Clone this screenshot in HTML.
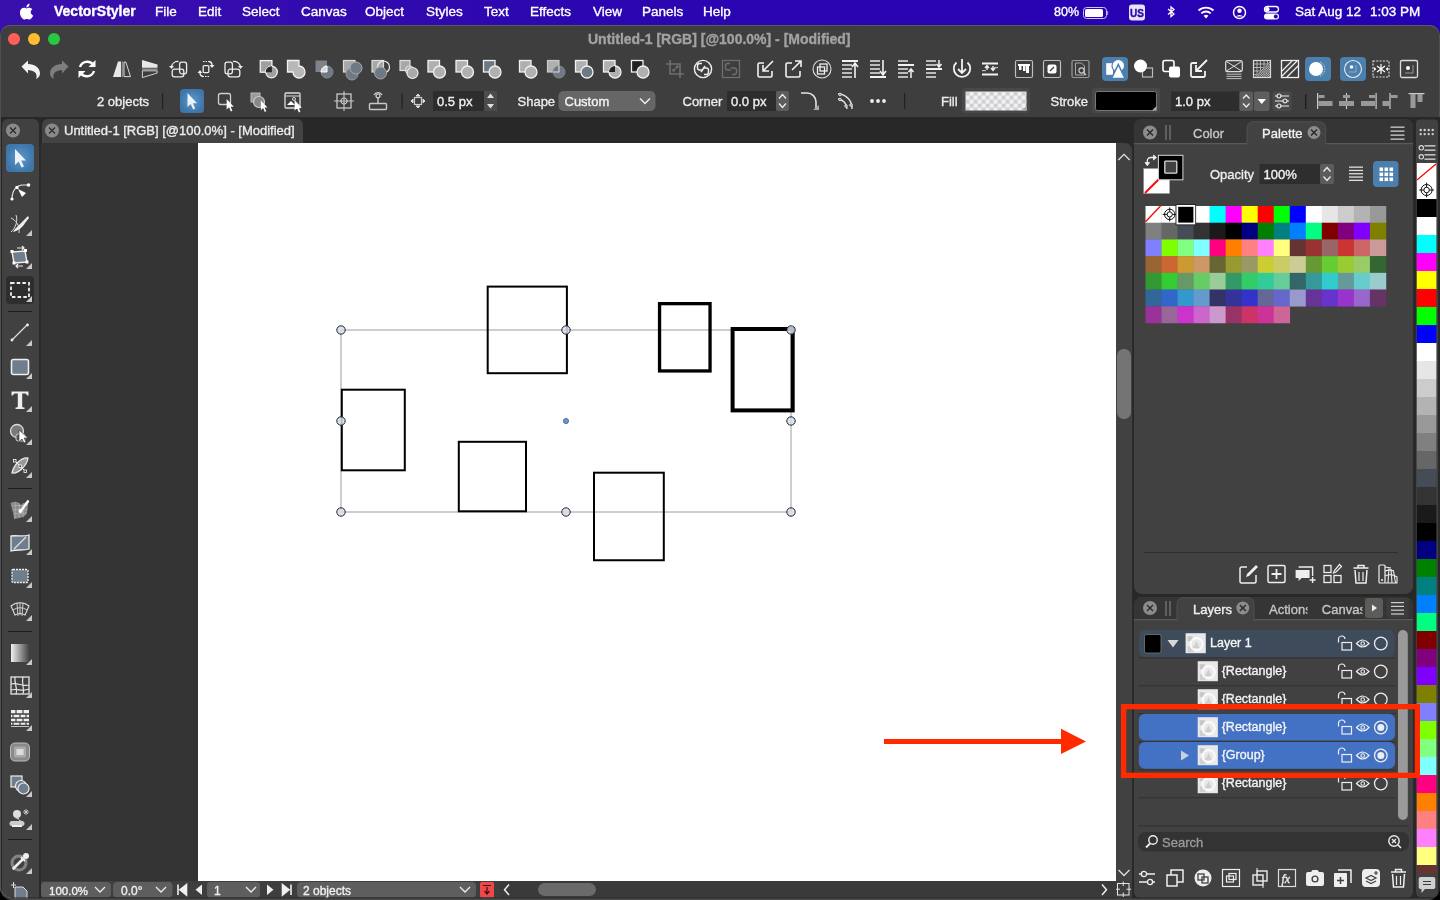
<!DOCTYPE html><html><head><meta charset="utf-8"><style>
html,body{margin:0;padding:0;width:1440px;height:900px;overflow:hidden;background:#000;}
body{font-family:"Liberation Sans",sans-serif;position:relative;-webkit-font-smoothing:antialiased;}
.t{-webkit-text-stroke:0.35px currentColor;}
div,svg{box-sizing:border-box;will-change:transform;}
</style></head><body>
<div style="position:absolute;left:0px;top:0px;width:1440px;height:40px;background:linear-gradient(90deg,#3a10ac,#2c06b0 40%,#2500b4);"></div>
<svg style="position:absolute;left:0px;top:0px;overflow:visible;" width="60" height="25" viewBox="0 0 60 25"><g transform="translate(27.5,11.3) scale(1.02) translate(-24.5,-12.3)"><path d="M27.6 13.2c0-1.9 1.6-2.8 1.6-2.9-.9-1.3-2.3-1.5-2.8-1.5-1.2-.1-2.3.7-2.9.7-.6 0-1.5-.7-2.5-.7-1.3 0-2.5.8-3.2 1.9-1.4 2.4-.4 5.9 1 7.8.7.9 1.4 2 2.5 1.9 1-.0 1.4-.6 2.6-.6 1.2 0 1.5.6 2.6.6 1.1 0 1.8-1 2.4-1.9.8-1.1 1.1-2.1 1.1-2.2 0 0-2.1-.8-2.4-3.1zM25.7 7.4c.5-.7.9-1.6.8-2.5-.8 0-1.8.5-2.3 1.2-.5.6-.9 1.5-.8 2.4.9.1 1.8-.4 2.3-1.1z" fill="#fff"/></g></svg>
<div class="t" style="position:absolute;left:54px;top:4.2px;font-size:14px;font-weight:700;color:#fff;white-space:pre;line-height:1;">VectorStyler</div>
<div class="t" style="position:absolute;left:155px;top:4.5px;font-size:13.5px;font-weight:400;color:#fff;white-space:pre;line-height:1;">File</div>
<div class="t" style="position:absolute;left:198px;top:4.5px;font-size:13.5px;font-weight:400;color:#fff;white-space:pre;line-height:1;">Edit</div>
<div class="t" style="position:absolute;left:242px;top:4.5px;font-size:13.5px;font-weight:400;color:#fff;white-space:pre;line-height:1;">Select</div>
<div class="t" style="position:absolute;left:301px;top:4.5px;font-size:13.5px;font-weight:400;color:#fff;white-space:pre;line-height:1;">Canvas</div>
<div class="t" style="position:absolute;left:365px;top:4.5px;font-size:13.5px;font-weight:400;color:#fff;white-space:pre;line-height:1;">Object</div>
<div class="t" style="position:absolute;left:426px;top:4.5px;font-size:13.5px;font-weight:400;color:#fff;white-space:pre;line-height:1;">Styles</div>
<div class="t" style="position:absolute;left:484px;top:4.5px;font-size:13.5px;font-weight:400;color:#fff;white-space:pre;line-height:1;">Text</div>
<div class="t" style="position:absolute;left:530px;top:4.5px;font-size:13.5px;font-weight:400;color:#fff;white-space:pre;line-height:1;">Effects</div>
<div class="t" style="position:absolute;left:593px;top:4.5px;font-size:13.5px;font-weight:400;color:#fff;white-space:pre;line-height:1;">View</div>
<div class="t" style="position:absolute;left:642px;top:4.5px;font-size:13.5px;font-weight:400;color:#fff;white-space:pre;line-height:1;">Panels</div>
<div class="t" style="position:absolute;left:703px;top:4.5px;font-size:13.5px;font-weight:400;color:#fff;white-space:pre;line-height:1;">Help</div>
<div class="t" style="position:absolute;left:1054px;top:5.5px;font-size:12.5px;font-weight:400;color:#fff;white-space:pre;line-height:1;">80%</div>
<svg style="position:absolute;left:1080px;top:0px;overflow:visible;" width="360" height="25" viewBox="1080 0 360 25"><rect x="1083.5" y="7.5" width="23" height="11" rx="3" fill="none" stroke="#cfc8f0" stroke-width="1"/><rect x="1085" y="9" width="18" height="8" rx="1.5" fill="#fff"/><path d="M1107.5 11v4" stroke="#9a90d0" stroke-width="1.2"/><rect x="1129" y="4.5" width="16" height="16" rx="3" fill="#e8e4f8"/><text x="1137" y="17" font-size="10" font-weight="700" text-anchor="middle" fill="#2a08b0" font-family="Liberation Sans" stroke="#2a08b0" stroke-width="0.35">US</text><path d="M1168 9l6 5-3 2.5V7l3 2.5-6 5" fill="none" stroke="#fff" stroke-width="1.3"/><path d="M1198.5 10.5a11 11 0 0 1 15 0" fill="none" stroke="#fff" stroke-width="1.8"/><path d="M1201.3 13.3a7 7 0 0 1 9.4 0" fill="none" stroke="#fff" stroke-width="1.8"/><path d="M1203.6 15.8l2.4 2.6 2.4-2.6a3.5 3.5 0 0 0-4.8 0z" fill="#fff"/><circle cx="1239.5" cy="12.5" r="6" fill="none" stroke="#fff" stroke-width="1.5"/><circle cx="1239.5" cy="10.8" r="2.2" fill="#fff"/><path d="M1235.6 16.5a5 4 0 0 1 7.8 0" fill="#fff"/><rect x="1264.5" y="6.5" width="14" height="5.5" rx="2.75" fill="none" stroke="#fff" stroke-width="1.3"/><circle cx="1267.3" cy="9.25" r="2.2" fill="#fff"/><rect x="1264" y="13.5" width="15" height="6" rx="3" fill="#fff"/><circle cx="1275.8" cy="16.5" r="2" fill="#2a08b0"/></svg>
<div class="t" style="position:absolute;left:1295px;top:4.5px;font-size:13.5px;font-weight:400;color:#fff;white-space:pre;line-height:1;">Sat Aug 12</div>
<div class="t" style="position:absolute;left:1370px;top:4.5px;font-size:13.5px;font-weight:400;color:#fff;white-space:pre;line-height:1;">1:03 PM</div>
<div style="position:absolute;left:0px;top:25px;width:1440px;height:875px;background:#3e3e3e;border-radius:10px 10px 0 0;border-top:1px solid #5a5a5a;border-left:1px solid #505050;border-right:1px solid #505050;"></div>
<div class="t" style="position:absolute;left:588px;top:32px;font-size:14px;font-weight:700;color:#a2a2a2;white-space:pre;line-height:1;">Untitled-1 [RGB] [@100.0%] - [Modified]</div>
<div style="position:absolute;left:8px;top:33px;width:12px;height:12px;background:#fe5f57;border-radius:50%;"></div>
<div style="position:absolute;left:28px;top:33px;width:12px;height:12px;background:#febc2e;border-radius:50%;"></div>
<div style="position:absolute;left:48px;top:33px;width:12px;height:12px;background:#28c840;border-radius:50%;"></div>
<div style="position:absolute;left:1px;top:117px;width:1438px;height:26px;background:#282828;"></div>
<div style="position:absolute;left:1px;top:117px;width:1.2px;height:783px;background:#262626;"></div>
<div style="position:absolute;left:2px;top:119px;width:37px;height:781px;background:#414141;border-radius:6px 6px 0 0;"></div>
<div style="position:absolute;left:39px;top:143px;width:2px;height:757px;background:#2a2a2a;"></div>
<div style="position:absolute;left:42px;top:119px;width:261px;height:24px;background:#434343;border-radius:6px 6px 0 0;"></div>
<div class="t" style="position:absolute;left:64px;top:124px;font-size:13px;font-weight:400;color:#ececec;white-space:pre;line-height:1;">Untitled-1 [RGB] [@100.0%] - [Modified]</div>
<svg style="position:absolute;left:0px;top:119px;overflow:visible;" width="80" height="24" viewBox="0 119 80 24"><circle cx="13" cy="130.5" r="7" fill="#8a8a8a"/><path d="M10 127.5l6 6M16 127.5l-6 6" stroke="#2a2a2a" stroke-width="1.2"/><circle cx="52" cy="130.5" r="7" fill="#8a8a8a"/><path d="M49 127.5l6 6M55 127.5l-6 6" stroke="#2a2a2a" stroke-width="1.2"/></svg>
<svg style="position:absolute;left:0px;top:25px;overflow:visible;" width="1440" height="92" viewBox="0 25 1440 92"><g transform="translate(31,69)"><path d="M-9.5 -2.5 L-3 -8.5 V-5 C4 -5 9 -1 9 4.5 C9 7 7.5 9 5 10 C6.5 7 6 1.5 -3 1 V4.5 Z" fill="#f2f2f2"/></g><g transform="translate(59,69) scale(-1,1)"><path d="M-9.5 -2.5 L-3 -8.5 V-5 C4 -5 9 -1 9 4.5 C9 7 7.5 9 5 10 C6.5 7 6 1.5 -3 1 V4.5 Z" fill="#7e7e7e"/></g><g transform="translate(87,69)"><path d="M-7 -2 A7.5 7.5 0 0 1 6 -4.5" fill="none" stroke="#fff" stroke-width="2.4"/><path d="M8.5 -9 V-2 H1.5 Z" fill="#fff"/><path d="M7 2 A7.5 7.5 0 0 1 -6 4.5" fill="none" stroke="#fff" stroke-width="2.4"/><path d="M-8.5 9 V2 H-1.5 Z" fill="#fff"/></g><g transform="translate(122,69)"><path d="M-4 -7.5 H-1 V8 H-9 Z" fill="#e8e8e8"/><rect x="-0.3" y="-7.5" width="1.5" height="15.5" fill="#8a8a8a"/><path d="M2 -7 H3.8 L8.5 7.6 H2 Z" fill="none" stroke="#d8d8d8" stroke-width="1"/></g><g transform="translate(150,69)"><path d="M-8 -9 L7.5 -4.5 V-1.2 H-8 Z" fill="#e8e8e8"/><rect x="-8" y="-0.6" width="15.5" height="1.6" fill="#8a8a8a"/><path d="M-7.6 1.8 H7.2 V4 L-7.6 8.6 Z" fill="none" stroke="#d0d0d0" stroke-width="1"/></g><g transform="translate(178,69)"><rect x="1.6" y="-6.8" width="7" height="11.6" rx="2.2" fill="none" stroke="#ececec" stroke-width="1.3"/><rect x="-5.8" y="0.2" width="11.6" height="7.6" rx="2.2" fill="none" stroke="#ececec" stroke-width="1.3"/><path d="M0.5 -7.5 A6.5 6.5 0 0 0 -6.5 -2.5" fill="none" stroke="#ececec" stroke-width="1.3"/><path d="M-9 -3 L-6.5 0 L-4 -3 Z" fill="#ececec"/></g><g transform="translate(206,69)"><rect x="-2.8" y="-3.4" width="5.6" height="7" rx="1" fill="none" stroke="#ececec" stroke-width="1.3"/><path d="M-3 -7.5 H3" stroke="#ececec" stroke-width="1.2" stroke-dasharray="1.5 1"/><path d="M3 -7.5 A3.5 3.5 0 0 1 6 -4" fill="none" stroke="#ececec" stroke-width="1.3"/><path d="M3.5 -4 L6 -1 L8.5 -4 Z" fill="#ececec"/><path d="M3 7.5 H-3" stroke="#ececec" stroke-width="1.2" stroke-dasharray="1.5 1"/><path d="M-3 7.5 A3.5 3.5 0 0 1 -6 4" fill="none" stroke="#ececec" stroke-width="1.3"/><path d="M-3.5 4 L-6 1 L-8.5 4 Z" fill="#ececec"/></g><g transform="translate(234,69)"><rect x="-9" y="-6.8" width="7.4" height="11.6" rx="2.2" fill="none" stroke="#ececec" stroke-width="1.3"/><rect x="-6" y="0.2" width="11.8" height="7.6" rx="2.2" fill="none" stroke="#ececec" stroke-width="1.3"/><path d="M-1 -7.5 A6.5 6.5 0 0 1 6.5 -2.5" fill="none" stroke="#ececec" stroke-width="1.3"/><path d="M4 -3 L6.5 0 L9 -3 Z" fill="#ececec"/></g><g transform="translate(268.5,69)"><rect x="-8.2" y="-8.4" width="11.6" height="11.6" fill="#a0a0a0" stroke="#f2f2f2" stroke-width="1.3"/><circle cx="3" cy="3" r="5.8" fill="#a0a0a0" stroke="#f2f2f2" stroke-width="1.3"/><path d="M-2.8 3.2 A5.8 5.8 0 0 1 3.4 -2.8 V3.2 Z" fill="#2a2a2a"/></g><g transform="translate(296,69)"><path d="M-8.5 -8.5 H3 V-3 A6 6 0 1 1 -3 3 H-8.5 Z" fill="#b8b8b8" stroke="#f2f2f2" stroke-width="1.3"/></g><g transform="translate(324,69)"><rect x="-8.5" y="-8.5" width="11.5" height="11.5" fill="#7d838c"/><circle cx="3" cy="3" r="6" fill="#6f7986" stroke="#8a8a8a" stroke-width="1"/><path d="M-3 3 A6 6 0 0 1 3 -3 V3 Z" fill="#d8d8d8" stroke="#fff" stroke-width="1"/></g><g transform="translate(352,69)"><rect x="-8.5" y="-8.5" width="11.5" height="11.5" fill="#a8a8a8" stroke="#ddd" stroke-width="1.2"/><circle cx="0" cy="5" r="6" fill="#6f7986" stroke="#999" stroke-width="1"/><circle cx="4" cy="-1" r="6" fill="#6f7986" stroke="#aaa" stroke-width="1"/></g><g transform="translate(380.5,69)"><rect x="-8.5" y="-8.5" width="11.5" height="11.5" fill="#a8a8a8" stroke="#ddd" stroke-width="1.2"/><circle cx="3" cy="-2" r="6" fill="none" stroke="#eee" stroke-width="1.2"/><circle cx="0" cy="4" r="6" fill="#6f7986" stroke="#aaa" stroke-width="1"/></g><g transform="translate(408.5,69)"><rect x="-8.5" y="-8.5" width="10" height="10" fill="#a8a8a8" stroke="#ddd" stroke-width="1.2"/><circle cx="1" cy="1" r="4" fill="none" stroke="#ddd" stroke-width="1.2"/><circle cx="4" cy="4" r="5.5" fill="#aaa" stroke="#eee" stroke-width="1.2"/></g><g transform="translate(436.5,69)"><rect x="-8.5" y="-8.5" width="11.5" height="11.5" fill="#b0b0b0" stroke="#f2f2f2" stroke-width="1.3"/><circle cx="3" cy="3" r="6" fill="#b0b0b0" stroke="#f2f2f2" stroke-width="1.3"/></g><g transform="translate(464.5,69)"><rect x="-8.5" y="-8.5" width="11.5" height="11.5" fill="#b0b0b0" stroke="#f2f2f2" stroke-width="1.3"/><circle cx="3" cy="3" r="6" fill="#b0b0b0" stroke="#f2f2f2" stroke-width="1.3"/></g><g transform="translate(492,69)"><rect x="-8.5" y="-8.5" width="11.5" height="11.5" fill="#6f7986" stroke="#f2f2f2" stroke-width="1.3"/><circle cx="3" cy="3" r="6" fill="#b0b0b0" stroke="#f2f2f2" stroke-width="1.3"/></g><g transform="translate(528,69)"><rect x="-8.5" y="-8.5" width="11.5" height="11.5" fill="#b0b0b0" stroke="#f2f2f2" stroke-width="1.3"/><circle cx="3" cy="3" r="6" fill="#b0b0b0" stroke="#f2f2f2" stroke-width="1.3"/></g><g transform="translate(556,69)"><rect x="-8.5" y="-8.5" width="11.5" height="11.5" fill="#b0b0b0" stroke="#ccc" stroke-width="1.2"/><circle cx="3" cy="3" r="6" fill="#6f7986" stroke="#888" stroke-width="1"/><path d="M-3 3 H3 V-3" fill="none" stroke="#ddd" stroke-width="1.1"/></g><g transform="translate(584,69)"><rect x="-8.5" y="-8.5" width="11.5" height="11.5" fill="#b0b0b0" stroke="#f2f2f2" stroke-width="1.3"/><circle cx="3" cy="3" r="6" fill="#6f7986" stroke="#f2f2f2" stroke-width="1.3"/></g><g transform="translate(612,69)"><rect x="-8.5" y="-8.5" width="11.5" height="11.5" fill="#b0b0b0" stroke="#f2f2f2" stroke-width="1.3"/><circle cx="3" cy="3" r="6" fill="#b0b0b0" stroke="#f2f2f2" stroke-width="1.3"/><path d="M-3 3 A6 6 0 0 1 3 -3 V3 Z" fill="#222"/></g><g transform="translate(640,69)"><rect x="-8.5" y="-8.5" width="11.5" height="11.5" fill="#222" stroke="#f2f2f2" stroke-width="1.3"/><circle cx="3" cy="3" r="6" fill="#b0b0b0" stroke="#f2f2f2" stroke-width="1.3"/></g><g transform="translate(675,69)"><path d="M-5 -9 V5 H9 M-9 -5 H5 V9" fill="none" stroke="#6e6e6e" stroke-width="1.6"/><path d="M-2 2 L3 -3 M1 -3 H3 V-1 M-2 0 V2 H0" fill="none" stroke="#6e6e6e" stroke-width="1.2"/></g><g transform="translate(703,69)"><circle r="8.6" fill="none" stroke="#eee" stroke-width="1.4"/><path d="M-1 -5.5 H-3.5 A2.2 2.2 0 0 0 -5.5 -3.3 V-1 A2.2 2.2 0 0 0 -3.3 1 H0 M1 5.5 H3.5 A2.2 2.2 0 0 0 5.5 3.3 V1 A2.2 2.2 0 0 0 3.3 -1 H0 M-2 3 L2 -3" fill="none" stroke="#eee" stroke-width="1.5"/></g><g transform="translate(731,69)"><rect x="-8.5" y="-8.5" width="17" height="17" fill="none" stroke="#6e6e6e" stroke-width="1.3"/><path d="M-1 -5.5 H-3.5 A2.2 2.2 0 0 0 -5.5 -3.3 V-1 A2.2 2.2 0 0 0 -3.3 1 H0 M1 5.5 H3.5 A2.2 2.2 0 0 0 5.5 3.3 V1 A2.2 2.2 0 0 0 3.3 -1 H0" fill="none" stroke="#6e6e6e" stroke-width="1.4"/></g><g transform="translate(766,69)"><path d="M-2 -6 H-6.5 A1.5 1.5 0 0 0 -8 -4.5 V6.5 A1.5 1.5 0 0 0 -6.5 8 H4.5 A1.5 1.5 0 0 0 6 6.5 V2" fill="none" stroke="#f2f2f2" stroke-width="1.6"/><path d="M7 -8 L-2 1 M-3 -4 V2 H3" fill="none" stroke="#f2f2f2" stroke-width="1.6"/></g><g transform="translate(794,69)"><path d="M-2 -6 H-6.5 A1.5 1.5 0 0 0 -8 -4.5 V6.5 A1.5 1.5 0 0 0 -6.5 8 H4.5 A1.5 1.5 0 0 0 6 6.5 V2" fill="none" stroke="#f2f2f2" stroke-width="1.6"/><path d="M-2 1 L7 -8 M1 -8 H7 V-2" fill="none" stroke="#f2f2f2" stroke-width="1.6"/></g><g transform="translate(822,69)"><circle r="9" fill="none" stroke="#ddd" stroke-width="1.1"/><rect x="-4.5" y="-2" width="7" height="7" fill="none" stroke="#eee" stroke-width="1.3"/><rect x="-2" y="-5" width="7" height="7" fill="none" stroke="#eee" stroke-width="1.3"/></g><g transform="translate(850,69)"><rect x="-8" y="-9" width="16" height="2" fill="#f2f2f2"/><rect x="-8" y="-5" width="10" height="2" fill="#bbb"/><rect x="-8" y="-1" width="10" height="2" fill="#bbb"/><rect x="-8" y="3" width="10" height="2" fill="#bbb"/><rect x="-8" y="7" width="10" height="2" fill="#bbb"/><path d="M5 9 V-5 M2 -2 L5 -6 L8 -2" fill="none" stroke="#f2f2f2" stroke-width="1.6"/></g><g transform="translate(878,69)"><rect x="-8" y="7" width="16" height="2" fill="#f2f2f2"/><rect x="-8" y="-9" width="10" height="2" fill="#bbb"/><rect x="-8" y="-5" width="10" height="2" fill="#bbb"/><rect x="-8" y="-1" width="10" height="2" fill="#bbb"/><rect x="-8" y="3" width="10" height="2" fill="#bbb"/><path d="M5 -9 V5 M2 2 L5 6 L8 2" fill="none" stroke="#f2f2f2" stroke-width="1.6"/></g><g transform="translate(906,69)"><rect x="-8" y="-9" width="10" height="2" fill="#bbb"/><rect x="-8" y="-5" width="16" height="2" fill="#f2f2f2"/><rect x="-8" y="-1" width="10" height="2" fill="#bbb"/><rect x="-8" y="3" width="10" height="2" fill="#bbb"/><rect x="-8" y="7" width="10" height="2" fill="#bbb"/><path d="M5 9 V0 M2.5 3 L5 0 L7.5 3" fill="none" stroke="#f2f2f2" stroke-width="1.5"/></g><g transform="translate(934,69)"><rect x="-8" y="-9" width="10" height="2" fill="#bbb"/><rect x="-8" y="-5" width="10" height="2" fill="#bbb"/><rect x="-8" y="-1" width="16" height="2" fill="#f2f2f2"/><rect x="-8" y="3" width="10" height="2" fill="#bbb"/><rect x="-8" y="7" width="10" height="2" fill="#bbb"/><path d="M5 -9 V-2 M2.5 -5 L5 -2 L7.5 -5" fill="none" stroke="#f2f2f2" stroke-width="1.5"/></g><g transform="translate(962,69)"><path d="M-5.5 -6.5 A8.2 8.2 0 1 0 5.5 -6.5" fill="none" stroke="#f2f2f2" stroke-width="1.8"/><path d="M0 -10 V4 M-4 0 L0 4 L4 0" fill="none" stroke="#f2f2f2" stroke-width="1.8"/></g><g transform="translate(990,69)"><rect x="-8" y="-6.5" width="16" height="2" fill="#f2f2f2"/><rect x="-8" y="4.5" width="16" height="2" fill="#f2f2f2"/><path d="M-3 1 V-3 M-5 -1 L-3 -3.5 L-1 -1 M3 -3 V1 M1 -1 L3 1.5 L5 -1" fill="none" stroke="#f2f2f2" stroke-width="1.4"/><rect x="-8" y="1" width="4" height="1.2" fill="#bbb"/><rect x="4" y="-2" width="4" height="1.2" fill="#bbb"/></g><g transform="translate(1024,69)"><rect x="-8.5" y="-8.5" width="17" height="17" rx="1.5" fill="none" stroke="#bdbdbd" stroke-width="1.2"/><rect x="-6" y="-5" width="12" height="2" fill="#fff"/><rect x="-5" y="-4" width="2.5" height="5" fill="#fff"/><rect x="-1" y="-4" width="2.5" height="6" fill="#fff"/><rect x="2" y="-4" width="3" height="8" fill="#fff"/></g><g transform="translate(1052,69)"><rect x="-8.5" y="-8.5" width="17" height="17" rx="1.5" fill="none" stroke="#bdbdbd" stroke-width="1.2"/><rect x="-4.5" y="-4.5" width="9" height="9" rx="2" fill="#fff"/><path d="M-2 2 L2 -2" stroke="#3e3e3e" stroke-width="1.2"/></g><g transform="translate(1080.5,69)"><rect x="-8.5" y="-8.5" width="17" height="17" rx="1.5" fill="none" stroke="#9a9a9a" stroke-width="1.2"/><path d="M-5 -6 H1 L4 -3 V6 H-5 Z" fill="none" stroke="#aaa" stroke-width="1"/><circle cx="1" cy="1.5" r="2.6" fill="none" stroke="#ccc" stroke-width="1.1"/><path d="M3 3.5 L5.5 6" stroke="#ccc" stroke-width="1.3"/></g><rect x="1102" y="57" width="26" height="24" rx="4" fill="#4a7fae"/><g transform="translate(1115,69)"><rect x="-8.8" y="-5.8" width="6.8" height="11.6" fill="#fff"/><circle cx="3.3" cy="-3.2" r="6.3" fill="#fff" stroke="#4a7fae" stroke-width="1.2"/><path d="M3.3 -4.5 L-3.5 9.5 H10 Z" fill="#fff" stroke="#4a7fae" stroke-width="1.6" stroke-linejoin="miter"/></g><g transform="translate(1143.5,69)"><rect x="-1" y="-1" width="10" height="9" fill="none" stroke="#bbb" stroke-width="1.2"/><circle cx="-3" cy="-3" r="6.5" fill="#fff"/></g><g transform="translate(1171,69)"><rect x="-8" y="-8.5" width="11" height="11" rx="2" fill="none" stroke="#fff" stroke-width="1.6"/><rect x="-2" y="-2.5" width="11" height="11" rx="2" fill="#fff"/></g><g transform="translate(1199,69)"><path d="M-2 -6 H-6.5 A1.5 1.5 0 0 0 -8 -4.5 V6.5 A1.5 1.5 0 0 0 -6.5 8 H4.5 A1.5 1.5 0 0 0 6 6.5 V2" fill="none" stroke="#f2f2f2" stroke-width="1.8"/><path d="M8 -9 L-2 1 M-3 -4 V2 H3" fill="none" stroke="#f2f2f2" stroke-width="1.8"/></g><g transform="translate(1234,69)"><rect x="-8.3" y="-8.3" width="16.6" height="11" rx="2" fill="none" stroke="#ddd" stroke-width="1.2"/><path d="M-7.5 -7.5 L7.5 2 M7.5 -7.5 L-7.5 2" stroke="#ddd" stroke-width="1"/><path d="M-7.5 5.2 H7.5 M-7.5 7.4 H7.5 M-7.5 9.6 H7.5" stroke="#cfcfcf" stroke-width="0.9"/></g><g transform="translate(1262,69)"><defs><pattern id="ck2" x="0" y="0" width="2.4" height="2.4" patternUnits="userSpaceOnUse"><rect width="2.4" height="2.4" fill="#3e3e3e"/><rect width="1.2" height="1.2" fill="#cfcfcf"/><rect x="1.2" y="1.2" width="1.2" height="1.2" fill="#cfcfcf"/></pattern></defs><rect x="-8.5" y="-8.5" width="17" height="17" fill="none" stroke="#ddd" stroke-width="1.2"/><path d="M-8.5 -5 H8.5 M-8.5 -1.5 H8.5 M-8.5 2 H8.5 M-8.5 5.5 H8.5 M-5 -8.5 V8.5 M-1.5 -8.5 V8.5 M2 -8.5 V8.5 M5.5 -8.5 V8.5" stroke="#ccc" stroke-width="0.8"/><path d="M8 -8 V8 H-8 Z" fill="url(#ck2)"/></g><g transform="translate(1290,69)"><rect x="-8.5" y="-8.5" width="17" height="17" fill="none" stroke="#eee" stroke-width="1.3"/><path d="M-8 2 L2 -8 M-8 7 L7 -8 M-3 8 L8 -3" stroke="#eee" stroke-width="1.3"/></g><rect x="1305" y="57" width="26" height="24" rx="4" fill="#4a7fae"/><g transform="translate(1317,69)"><circle cx="-1" cy="0" r="7" fill="#fff"/><path d="M3 -7 A7.5 7.5 0 0 1 3 7" fill="none" stroke="#ddd" stroke-width="1" stroke-dasharray="1.5 1.2"/></g><rect x="1340" y="57" width="26" height="24" rx="4" fill="#4a7fae"/><g transform="translate(1353,69)"><circle r="8.5" fill="none" stroke="#e8e8e8" stroke-width="1.1"/><circle cx="-1.5" cy="-2" r="1.8" fill="#fff"/><path d="M-4 3 H3 V-4" fill="none" stroke="#9ab" stroke-width="1"/></g><g transform="translate(1381,69)"><rect x="-8" y="-8" width="16" height="16" fill="none" stroke="#ddd" stroke-width="1.2" stroke-dasharray="2 1.3"/><path d="M0 -5 V5 M-4 -3 L4 3 M4 -3 L-4 3" stroke="#fff" stroke-width="1.2"/><path d="M-7 -1.5 L-5 0 L-7 1.5 M7 -1.5 L5 0 L7 1.5" fill="#fff" stroke="#fff" stroke-width="0.8"/></g><g transform="translate(1409,69)"><rect x="-8.5" y="-8.5" width="17" height="17" rx="1.5" fill="none" stroke="#ddd" stroke-width="1.3"/><circle cx="-1" cy="-1" r="2" fill="#fff"/><path d="M-4 4 H4 V-4" fill="none" stroke="#999" stroke-width="1"/></g><text x="97" y="106" font-size="13" fill="#ececec" font-family="Liberation Sans" stroke="#ececec" stroke-width="0.35">2 objects</text><rect x="162" y="93" width="1.2" height="16" fill="#222"/><defs><radialGradient id="bg1"><stop offset="0" stop-color="#5c9ad0"/><stop offset="1" stop-color="#3f76aa"/></radialGradient></defs><rect x="180" y="89" width="24" height="24" rx="4" fill="url(#bg1)"/><g transform="translate(192,101)"><path d="M-4.5 -8 V6 L-1.3 3 L1.2 8.5 L3.2 7.6 L0.8 2.3 L5 2.3 Z" fill="#eef3f8"/></g><g transform="translate(226,101)"><rect x="-7.5" y="-7.5" width="12" height="11" rx="2" fill="none" stroke="#d0d0d0" stroke-width="1.3"/><g transform="translate(4,4) scale(0.75)"><path d="M-4.5 -8 V6 L-1.3 3 L1.2 8.5 L3.2 7.6 L0.8 2.3 L5 2.3 Z" fill="#fff"/></g></g><g transform="translate(259,101)"><rect x="-8" y="-8" width="9" height="9" fill="#999" stroke="#bbb" stroke-width="1"/><circle cx="0" cy="1" r="5.5" fill="#888" stroke="#ccc" stroke-width="1.2"/><g transform="translate(5,5) scale(0.7)"><path d="M-4.5 -8 V6 L-1.3 3 L1.2 8.5 L3.2 7.6 L0.8 2.3 L5 2.3 Z" fill="#fff"/></g></g><g transform="translate(293,101)"><rect x="-8" y="-8" width="15" height="15" rx="1" fill="none" stroke="#ddd" stroke-width="1.3"/><path d="M-8 -5 H7" stroke="#ddd"/><path d="M-6 4 L-2 0 L2 4 Z" fill="#fff"/><circle cx="1" cy="-2" r="1.5" fill="none" stroke="#ddd"/><g transform="translate(5,5) scale(0.75)"><path d="M-4.5 -8 V6 L-1.3 3 L1.2 8.5 L3.2 7.6 L0.8 2.3 L5 2.3 Z" fill="#fff"/></g></g><g transform="translate(344,101)"><rect x="-7" y="-7" width="14" height="14" fill="none" stroke="#c8c8c8" stroke-width="1.3"/><circle r="3" fill="none" stroke="#c8c8c8" stroke-width="1.2"/><path d="M0 -10 V10 M-10 0 H10" stroke="#c8c8c8" stroke-width="1.1"/></g><g transform="translate(378,101)"><rect x="-8.5" y="2.5" width="17" height="6" rx="1" fill="none" stroke="#c8c8c8" stroke-width="1.4"/><path d="M0 2 V-4" stroke="#c8c8c8" stroke-width="1.4"/><circle cx="0" cy="-5" r="2" fill="none" stroke="#ddd" stroke-width="1.2"/><path d="M-4 -6 A4.5 4.5 0 0 1 4 -6" fill="none" stroke="#ddd" stroke-width="1.2"/></g><rect x="401.5" y="93" width="1.2" height="16" fill="#222"/><g transform="translate(418,101)"><rect x="-3.5" y="-3.5" width="7" height="7" fill="none" stroke="#ccc" stroke-width="1.2"/><path d="M0 -7 L-2 -5 H2Z M0 7 L-2 5 H2Z M-7 0 L-5 -2 V2Z M7 0 L5 -2 V2Z" fill="#ddd" stroke="#ddd"/></g><rect x="433" y="91" width="51" height="20" fill="#2d2d2d"/><text x="437" y="106" font-size="13" fill="#f0f0f0" font-family="Liberation Sans" stroke="#f0f0f0" stroke-width="0.35">0.5 px</text><rect x="484" y="91" width="13" height="20" fill="#4c4c4c"/><path d="M487 98 L490.5 93.5 L494 98 Z M487 104 L490.5 108.5 L494 104 Z" fill="#e0e0e0"/><text x="517.5" y="106" font-size="13" fill="#ececec" font-family="Liberation Sans" stroke="#ececec" stroke-width="0.35">Shape</text><rect x="558.5" y="91" width="97" height="20" rx="5" fill="#666"/><text x="564.5" y="106" font-size="13" fill="#f4f4f4" font-family="Liberation Sans" stroke="#f4f4f4" stroke-width="0.35">Custom</text><path d="M640 98.5 L645 103.5 L650 98.5" fill="none" stroke="#eee" stroke-width="1.5"/><text x="682.5" y="106" font-size="13" fill="#ececec" font-family="Liberation Sans" stroke="#ececec" stroke-width="0.35">Corner</text><rect x="727" y="91" width="49" height="20" fill="#2d2d2d"/><text x="731" y="106" font-size="13" fill="#f0f0f0" font-family="Liberation Sans" stroke="#f0f0f0" stroke-width="0.35">0.0 px</text><rect x="776" y="91" width="13" height="20" rx="2" fill="#5c5c5c"/><path d="M779 98.5 L782.5 94.5 L786 98.5 M779 103.5 L782.5 107.5 L786 103.5" fill="none" stroke="#eee" stroke-width="1.3"/><g transform="translate(810,101)"><path d="M-9 -8 H-3 A9 9 0 0 1 6 1 V8" fill="none" stroke="#e4e4e4" stroke-width="1.6"/><path d="M3 9 L9 9 L9 4 Z" fill="#aaa"/></g><g transform="translate(846,101)"><path d="M-8 -7 A14 14 0 0 1 6 8 M-8 -2 A10 10 0 0 1 1 8" fill="none" stroke="#e4e4e4" stroke-width="1.4"/><circle cx="-6" cy="-6.5" r="1.3" fill="#888" stroke="#eee" stroke-width="0.8"/><circle cx="-6" cy="-1.5" r="1.3" fill="#888" stroke="#eee" stroke-width="0.8"/><circle cx="5" cy="4" r="1.3" fill="#888" stroke="#eee" stroke-width="0.8"/><circle cx="0" cy="5" r="1.3" fill="#888" stroke="#eee" stroke-width="0.8"/></g><g transform="translate(878,101)"><circle cx="-6" r="1.9" fill="#f0f0f0"/><circle cx="0" r="1.9" fill="#f0f0f0"/><circle cx="6" r="1.9" fill="#f0f0f0"/></g><rect x="904" y="93" width="1.2" height="16" fill="#222"/><text x="941" y="106" font-size="13" fill="#ececec" font-family="Liberation Sans" stroke="#ececec" stroke-width="0.35">Fill</text><rect x="962" y="88" width="68" height="25" rx="3" fill="#484848"/><defs><pattern id="chk" x="965.6" y="91.6" width="8" height="8" patternUnits="userSpaceOnUse"><rect width="8" height="8" fill="#f2f0f6"/><rect width="4" height="4" fill="#cfcfcf"/><rect x="4" y="4" width="4" height="4" fill="#cfcfcf"/></pattern></defs><rect x="965.5" y="91.5" width="61" height="19" fill="url(#chk)"/><path d="M1022 110.5 L1026.5 110.5 L1026.5 106 Z" fill="#aaa"/><text x="1050.5" y="106" font-size="13" fill="#ececec" font-family="Liberation Sans" stroke="#ececec" stroke-width="0.35">Stroke</text><rect x="1092" y="88" width="68" height="25" rx="3" fill="#484848"/><rect x="1095.5" y="91.5" width="61" height="19" rx="2" fill="#000" stroke="#777" stroke-width="1"/><path d="M1152 110.5 L1156.5 110.5 L1156.5 106 Z" fill="#aaa"/><rect x="1171" y="91.5" width="68" height="19.5" fill="#2d2d2d"/><text x="1175" y="106" font-size="13" fill="#f0f0f0" font-family="Liberation Sans" stroke="#f0f0f0" stroke-width="0.35">1.0 px</text><rect x="1239.5" y="91.5" width="13.5" height="19.5" rx="2" fill="#5c5c5c"/><path d="M1243 98.5 L1246.25 95 L1249.5 98.5 M1243 103.5 L1246.25 107 L1249.5 103.5" fill="none" stroke="#eee" stroke-width="1.3"/><rect x="1254" y="91.5" width="15.5" height="19.5" rx="2" fill="#5e5e5e"/><path d="M1257.5 99 L1261.75 104 L1266 99 Z" fill="#fff"/><rect x="1272.5" y="91.5" width="19" height="19.5" rx="2" fill="#4a4a4a"/><g transform="translate(1282,101)"><path d="M-7 -5 H7 M-7 0 H7 M-7 5 H7" stroke="#eee" stroke-width="1.2"/><circle cx="-3" cy="-5" r="2" fill="#4a4a4a" stroke="#eee" stroke-width="1.2"/><circle cx="3" cy="0" r="2" fill="#4a4a4a" stroke="#eee" stroke-width="1.2"/><circle cx="-3" cy="5" r="2" fill="#4a4a4a" stroke="#eee" stroke-width="1.2"/></g><rect x="1305" y="94" width="1.4" height="15" fill="#1e1e1e"/><g transform="translate(1324.5,101)"><rect x="-7.5" y="-8" width="1.2" height="16" fill="#ccc"/><rect x="-6" y="-6" width="6" height="3" fill="#999"/><rect x="-6" y="0" width="14" height="5" fill="#999"/></g><g transform="translate(1346.5,101)"><rect x="-0.6" y="-8" width="1.2" height="16" fill="#ccc"/><rect x="-3.5" y="-6" width="7" height="3" fill="#999"/><rect x="-7.5" y="0" width="15" height="5" fill="#999"/></g><g transform="translate(1369,101)"><rect x="6.5" y="-8" width="1.2" height="16" fill="#ccc"/><rect x="0" y="-6" width="6" height="3" fill="#999"/><rect x="-8" y="0" width="14" height="5" fill="#999"/></g><g transform="translate(1390,101)"><rect x="-0.6" y="-8" width="1.2" height="16" fill="#ccc"/><rect x="0.6" y="-6" width="7" height="3" fill="#999"/><rect x="-7.5" y="0" width="7" height="5" fill="#999"/></g><g transform="translate(1416.5,101)"><rect x="-8" y="-8" width="16" height="1.2" fill="#ccc"/><rect x="-6" y="-7" width="5" height="14" fill="#999"/><rect x="1" y="-7" width="5" height="8" fill="#999"/></g></svg>
<svg style="position:absolute;left:0px;top:119px;overflow:visible;" width="41" height="781" viewBox="0 119 41 781"><defs><radialGradient id="bg2"><stop offset="0" stop-color="#5c9ad0"/><stop offset="1" stop-color="#3f76aa"/></radialGradient></defs><rect x="6" y="144" width="28" height="28" rx="4" fill="url(#bg2)"/><g transform="translate(20,158)"><path d="M-5 -9 V7 L-1.3 3.5 L1.5 9.5 L4 8.5 L1.2 2.5 L6 2.5 Z" fill="#eef2f6"/></g><g transform="translate(20,191)"><path d="M-8 8 C-8 0 -4 -6 3 -6 H8" fill="none" stroke="#e6e6e6" stroke-width="1.2"/><circle cx="-8" cy="8" r="1.6" fill="#fff"/><rect x="-4.5" y="-5" width="3" height="3" fill="#fff"/><circle cx="8.5" cy="-6" r="1.8" fill="#fff"/><path d="M-2 -2 L6 2 L2 6 Z" fill="#fff"/></g><g transform="translate(20,224)"><path d="M-9 -6 C-4 -4 0 2 -1 9 M-4 -9 C-2 -4 -4 4 -9 8" fill="none" stroke="#ddd" stroke-width="1"/><path d="M8 -8 L-5 5 L-7 8 C-2 7 3 3 5 -1 L9 -6 Z" fill="#eee"/></g><path d="M32 236 H26 L32 230 Z" fill="#c8c8c8"/><g transform="translate(20,257)"><path d="M-8 -5 L5 -6 L7 5 L-6 6 Z" fill="#6f7d8c" stroke="#eee" stroke-width="1.4"/><rect x="-9.5" y="-7" width="3" height="3" fill="#fff"/><rect x="4" y="-8" width="3" height="3" fill="#fff"/><rect x="5.5" y="3.5" width="3" height="3" fill="#fff"/><rect x="-7.5" y="4.5" width="3" height="3" fill="#fff"/><path d="M-3 -9 H4 M2 -11 L4 -9 L2 -7 M3 9 H-4 M-2 7 L-4 9 L-2 11" fill="none" stroke="#eee" stroke-width="1.2"/></g><path d="M32 269 H26 L32 263 Z" fill="#c8c8c8"/><rect x="6" y="276" width="28" height="28" rx="4" fill="#2e2e2e"/><g transform="translate(20,290)"><rect x="-9" y="-7" width="18" height="14" fill="none" stroke="#f0f0f0" stroke-width="1.8" stroke-dasharray="3.5 2.2"/></g><path d="M32 302 H26 L32 296 Z" fill="#c8c8c8"/><rect x="8" y="311" width="24" height="1" fill="#1e1e1e"/><g transform="translate(20,334)"><path d="M-8 6 L7 -9" stroke="#ddd" stroke-width="1.2"/><circle cx="-8" cy="6" r="1.4" fill="#eee"/><circle cx="7.5" cy="-9" r="1.4" fill="#eee"/></g><path d="M32 346 H26 L32 340 Z" fill="#c8c8c8"/><g transform="translate(20,367)"><rect x="-8.5" y="-7.5" width="17" height="15" rx="2" fill="#6f7d8c" stroke="#eee" stroke-width="1.6"/></g><path d="M32 379 H26 L32 373 Z" fill="#c8c8c8"/><g transform="translate(20,400)"><path d="M-8.5 -8.5 H8.5 V-4.5 H7 C6.5 -6 6 -6.5 4 -6.5 H2.2 V6.5 C2.2 7.2 3 7.5 4.5 7.5 V9 H-4.5 V7.5 C-3 7.5 -2.2 7.2 -2.2 6.5 V-6.5 H-4 C-6 -6.5 -6.5 -6 -7 -4.5 H-8.5 Z" fill="#eee"/></g><path d="M32 412 H26 L32 406 Z" fill="#c8c8c8"/><g transform="translate(20,433)"><circle cx="-3" cy="-2" r="6.5" fill="#7a7a7a" stroke="#ddd" stroke-width="1.3"/><rect x="-4" y="1" width="9" height="7" rx="2" fill="#555" stroke="#ccc" stroke-width="1"/><path d="M-1 -3 V9 L2 6 L4 10 L6 9 L4 5 L8 5 Z" fill="#fff" stroke="#333" stroke-width="0.6"/></g><path d="M32 445 H26 L32 439 Z" fill="#c8c8c8"/><g transform="translate(20,466)"><path d="M-8 7 C-6 -2 2 -9 8 -8 C7 -1 -1 8 -8 7 Z" fill="#999" stroke="#eee" stroke-width="1.2"/><path d="M-5 -5 L5 5" stroke="#eee" stroke-width="1"/><rect x="-6.5" y="-6.5" width="2.5" height="2.5" fill="#333" stroke="#fff" stroke-width="0.8"/><rect x="-1" y="-1" width="2.5" height="2.5" fill="#333" stroke="#fff" stroke-width="0.8"/><rect x="4" y="4" width="2.5" height="2.5" fill="#333" stroke="#fff" stroke-width="0.8"/></g><path d="M32 478 H26 L32 472 Z" fill="#c8c8c8"/><rect x="8" y="488" width="24" height="1" fill="#1e1e1e"/><g transform="translate(20,510)"><path d="M-9.5 -7 C-5 -9.5 -1 -8 1 -5 C3 -7 6 -8.5 8.5 -8 L7 3 C5 8 -2 8 -6 9 C-6 4 -8 0 -9.5 -7 Z" fill="#8a8a8a"/><path d="M-8 -4 C-3 -5 3 -4 8 -5 M-7.5 0 C-3 -1 3 0 7.5 -1 M-6.5 4 C-2 3 3 4 6.5 3 M-5 -8 C-4 -2 -5 4 -5 8.5 M-1 -7 C0 -2 -1 4 -1 8 M3 -7 C4 -2 3 4 3 7.5" fill="none" stroke="#b8b8b8" stroke-width="0.6"/><path d="M8.5 -9.5 L1.5 0" stroke="#fff" stroke-width="2.2"/><circle cx="0.5" cy="1" r="2" fill="#fff"/></g><path d="M32 522 H26 L32 516 Z" fill="#c8c8c8"/><g transform="translate(20,543)"><path d="M-9 -7 C-3 -8 3 -6 9 -8 V6 C3 8 -3 6 -9 8 Z" fill="#6f7d8c" stroke="#eee" stroke-width="1.3"/><path d="M-6 6 L6 -6" stroke="#ddd" stroke-width="1.2"/></g><path d="M32 555 H26 L32 549 Z" fill="#c8c8c8"/><g transform="translate(20,576)"><rect x="-8" y="-6.5" width="16" height="13" rx="1" fill="#6f7d8c" stroke="#eee" stroke-width="1.3" stroke-dasharray="2 1"/></g><path d="M32 588 H26 L32 582 Z" fill="#c8c8c8"/><g transform="translate(20,609)"><path d="M-9 -3 A14 14 0 0 1 9 -3 L5 6 A10 10 0 0 0 -5 6 Z" fill="none" stroke="#ddd" stroke-width="1.1"/><path d="M-7 1 A12 12 0 0 1 7 1 M-3 -6 L-2 7 M3 -6 L2 7 M0 -6.5 V6" fill="none" stroke="#ddd" stroke-width="0.9"/></g><path d="M32 621 H26 L32 615 Z" fill="#c8c8c8"/><rect x="8" y="631" width="24" height="1" fill="#1e1e1e"/><defs><linearGradient id="gr1" x1="0" x2="1"><stop offset="0" stop-color="#f0f0f0"/><stop offset="1" stop-color="#444"/></linearGradient></defs><g transform="translate(20,653)"><rect x="-9" y="-9" width="18" height="18" fill="url(#gr1)"/></g><path d="M32 665 H26 L32 659 Z" fill="#c8c8c8"/><g transform="translate(20,686)"><rect x="-9" y="-9" width="18" height="17" fill="none" stroke="#e6e6e6" stroke-width="1.3"/><path d="M-9 -2 C-3 -4 3 1 9 -1 M-9 4 C-3 2 3 6 9 3 M-5 -9 C-6 -3 -2 3 -4 8 M3 -9 C1 -2 5 3 3 8" fill="none" stroke="#e6e6e6" stroke-width="1.2"/></g><path d="M32 698 H26 L32 692 Z" fill="#c8c8c8"/><g transform="translate(20,719)"><rect x="-9" y="-9" width="18" height="17" fill="#eee"/><path d="M-9 -5 H9 M-9 -1 H9 M-9 3 H9 M-9 6.5 H9" stroke="#414141" stroke-width="1.4"/><path d="M-4 -9 V-5 M3 -9 V-5 M-7 -5 V-1 M0 -5 V-1 M6 -5 V-1 M-4 -1 V3 M3 -1 V3 M-7 3 V6.5 M0 3 V6.5 M6 3 V6.5" stroke="#414141" stroke-width="1.2"/></g><path d="M32 731 H26 L32 725 Z" fill="#c8c8c8"/><g transform="translate(20,752)"><rect x="-9.5" y="-9" width="19" height="18" rx="4.5" fill="#8a8a8a" stroke="#bbb" stroke-width="1"/><rect x="-6" y="-5.5" width="12" height="11" rx="2" fill="#aaa"/><rect x="-3.5" y="-3" width="7" height="6" fill="#ddd"/></g><g transform="translate(20,785)"><rect x="-9" y="-9" width="11" height="11" fill="#6f7d8c" stroke="#eee" stroke-width="1.2"/><circle cx="1" cy="1" r="5.5" fill="#6f7d8c" stroke="#eee" stroke-width="1.2"/><circle cx="3.5" cy="3.5" r="5.5" fill="#6f7d8c" stroke="#eee" stroke-width="1.2"/></g><path d="M32 797 H26 L32 791 Z" fill="#c8c8c8"/><g transform="translate(20,818)"><circle cx="-3" cy="-4" r="4" fill="#ddd"/><path d="M-5 0 H-1 V3 H-8 A1 1 0 0 0 -8 8 H2 A1 1 0 0 0 2 3 V3 Z" fill="#ccc"/><rect x="-8" y="7" width="10" height="2" fill="#eee"/><path d="M4 -8 L8 -4 M8 -8 L4 -4 M6 -9 V-3 M3 -6 H9" stroke="#ccc" stroke-width="0.9"/></g><path d="M32 830 H26 L32 824 Z" fill="#c8c8c8"/><rect x="8" y="839" width="24" height="1" fill="#1e1e1e"/><g transform="translate(20,862)"><circle cx="-1" cy="1" r="7" fill="none" stroke="#8a8a8a" stroke-width="3"/><circle cx="-1" cy="1" r="7" fill="none" stroke="#6a6a6a" stroke-width="3" stroke-dasharray="0.5 2.2"/><path d="M-6.5 6.5 L3 -3" stroke="#eee" stroke-width="2.6" stroke-linecap="round"/><path d="M1 -5 L5 -1" stroke="#eee" stroke-width="2"/><circle cx="6" cy="-6" r="3" fill="#eee"/></g><path d="M32 874 H26 L32 868 Z" fill="#c8c8c8"/><g transform="translate(20,890)"><path d="M-9 -5 H-4 M-6.5 -8 V-2" stroke="#ddd" stroke-width="1"/><path d="M-5 -3 H3 L7 1 V10 H-5 Z" fill="#6f7d8c" stroke="#ddd" stroke-width="1"/></g></svg>
<div style="position:absolute;left:41px;top:143px;width:1075px;height:738px;background:#333333;"></div>
<div style="position:absolute;left:198px;top:143px;width:918px;height:738px;background:#ffffff;"></div>
<svg style="position:absolute;left:198px;top:143px;overflow:visible;" width="918" height="738" viewBox="198 143 918 738"><rect x="341" y="330" width="450" height="182" fill="none" stroke="#9c9c9c" stroke-width="1"/><rect x="487.7" y="286.6" width="79.19999999999999" height="86.59999999999997" fill="none" stroke="#000" stroke-width="2"/><rect x="341.8" y="389.7" width="63.0" height="80.60000000000002" fill="none" stroke="#000" stroke-width="2"/><rect x="458.8" y="441.8" width="67.19999999999999" height="69.49999999999994" fill="none" stroke="#000" stroke-width="2"/><rect x="594.0" y="472.7" width="69.79999999999995" height="87.55000000000001" fill="none" stroke="#000" stroke-width="2"/><rect x="659.55" y="303.65" width="50.50000000000007" height="67.30000000000003" fill="none" stroke="#000" stroke-width="3.3"/><rect x="732.6" y="329.0" width="60.10000000000002" height="81.39999999999998" fill="none" stroke="#000" stroke-width="4"/><circle cx="341" cy="330" r="4.2" fill="#d4deec" fill-opacity="0.85" stroke="#222" stroke-width="1"/><circle cx="566" cy="330" r="4.2" fill="#d4deec" fill-opacity="0.85" stroke="#222" stroke-width="1"/><circle cx="791" cy="330" r="4.2" fill="#d4deec" fill-opacity="0.85" stroke="#222" stroke-width="1"/><circle cx="341" cy="421" r="4.2" fill="#d4deec" fill-opacity="0.85" stroke="#222" stroke-width="1"/><circle cx="791" cy="421" r="4.2" fill="#d4deec" fill-opacity="0.85" stroke="#222" stroke-width="1"/><circle cx="341" cy="512" r="4.2" fill="#d4deec" fill-opacity="0.85" stroke="#222" stroke-width="1"/><circle cx="566" cy="512" r="4.2" fill="#d4deec" fill-opacity="0.85" stroke="#222" stroke-width="1"/><circle cx="791" cy="512" r="4.2" fill="#d4deec" fill-opacity="0.85" stroke="#222" stroke-width="1"/><circle cx="566" cy="421" r="2.6" fill="#6a96e0" stroke="#2a3a60" stroke-width="0.6"/><rect x="884" y="739" width="178" height="5" fill="#ff2a00"/><path d="M1061 728.8 L1086 741.5 L1061 754 Z" fill="#ff2a00"/></svg>
<div style="position:absolute;left:1116px;top:143px;width:17px;height:12px;background:#282828;"></div>
<div style="position:absolute;left:1116px;top:143px;width:16px;height:738px;background:#414141;border-radius:0 7px 0 0;"></div>
<div style="position:absolute;left:1132px;top:143px;width:2px;height:757px;background:#2a2a2a;"></div>
<div style="position:absolute;left:1117px;top:348.5px;width:13.8px;height:69.5px;background:#747474;border-radius:6.5px;"></div>
<svg style="position:absolute;left:1116px;top:143px;overflow:visible;" width="18" height="757" viewBox="1116 143 18 757"><path d="M1118.3 160 L1124 154.3 L1129.7 160" fill="none" stroke="#e0e4ea" stroke-width="1.3"/><path d="M1118.5 870 L1124 875.5 L1129.5 870" fill="none" stroke="#dde" stroke-width="1.3"/><rect x="1117.5" y="883.5" width="11.5" height="11.5" fill="none" stroke="#e6e6e6" stroke-width="1"/><path d="M1123.25 881.5 V886 M1123.25 892.5 V897 M1115.5 889.25 H1120 M1126.5 889.25 H1131" stroke="#e6e6e6" stroke-width="1"/></svg>
<div style="position:absolute;left:1133px;top:117px;width:307px;height:783px;background:#282828;"></div>
<div style="position:absolute;left:1134px;top:119px;width:279px;height:475px;background:#414141;border-radius:8px;"></div>
<div style="position:absolute;left:1134px;top:597px;width:279px;height:300.5px;background:#414141;border-radius:8px 8px 6px 6px;"></div>
<svg style="position:absolute;left:1134px;top:119px;overflow:visible;" width="279" height="475" viewBox="1134 119 279 475"><path d="M1134 143.5 V127 A8 8 0 0 1 1142 119 H1405 A8 8 0 0 1 1413 127 V143.5 Z" fill="#353535"/><rect x="1134" y="143" width="279" height="1.2" fill="#5a5a5a"/><path d="M1247 144.2 V127.7 A6 6 0 0 1 1253 121.7 H1319.6 A6 6 0 0 1 1325.6 127.7 V144.2 Z" fill="#424242" stroke="#4e5560" stroke-width="0.8"/><rect x="1247.5" y="143" width="77.6" height="2" fill="#424242"/><circle cx="1150" cy="132.5" r="7" fill="#8c8c8c"/><path d="M1147 129.5 l6 6 M1153 129.5 l-6 6" stroke="#262626" stroke-width="1.3"/><rect x="1165.5" y="125" width="1" height="15" fill="#8a8a8a"/><rect x="1169.5" y="125" width="1" height="15" fill="#8a8a8a"/><text x="1193" y="137.8" font-size="13" fill="#c6c6c6" font-family="Liberation Sans" stroke="#c6c6c6" stroke-width="0.35">Color</text><text x="1262" y="137.8" font-size="13" fill="#f0f0f0" font-family="Liberation Sans" stroke="#f0f0f0" stroke-width="0.35">Palette</text><circle cx="1314" cy="132.5" r="6.5" fill="#8c8c8c"/><path d="M1311 129.5 l6 6 M1317 129.5 l-6 6" stroke="#262626" stroke-width="1.3"/><rect x="1390.5" y="126.5" width="14" height="1.3" fill="#cfcfcf"/><rect x="1390.5" y="130.5" width="14" height="1.3" fill="#cfcfcf"/><rect x="1390.5" y="134.5" width="14" height="1.3" fill="#cfcfcf"/><rect x="1390.5" y="138.5" width="14" height="1.3" fill="#cfcfcf"/><path d="M1147.3 163 V161 A3.5 3.5 0 0 1 1150.8 157.5 H1154" fill="none" stroke="#f0f0f0" stroke-width="1.3"/><path d="M1153.5 155 L1156.5 157.5 L1153.5 160 Z M1145 162.5 L1147.3 165.8 L1149.6 162.5 Z" fill="#f0f0f0" stroke="#f0f0f0" stroke-width="0.8"/><rect x="1143.7" y="168.5" width="26" height="25" fill="#fff" stroke="#999" stroke-width="0.6"/><path d="M1145 193 L1159.5 178.5" stroke="#ff0a0a" stroke-width="2"/><rect x="1158.4" y="155.3" width="24.5" height="24.5" fill="#000" stroke="#d8d8d8" stroke-width="1"/><rect x="1164.8" y="161.2" width="12" height="12" rx="0.8" fill="#414141" stroke="#dcdcdc" stroke-width="1.3"/><text x="1210" y="179" font-size="13" fill="#ececec" font-family="Liberation Sans" stroke="#ececec" stroke-width="0.35">Opacity</text><rect x="1259.6" y="164" width="60.4" height="20" fill="#2e2e2e"/><text x="1263.5" y="179" font-size="13" fill="#f2f2f2" font-family="Liberation Sans" stroke="#f2f2f2" stroke-width="0.35">100%</text><rect x="1320" y="164" width="14" height="20" rx="2" fill="#5c5c5c"/><path d="M1323.5 171.5 L1327 167.5 L1330.5 171.5 M1323.5 176.5 L1327 180.5 L1330.5 176.5" fill="none" stroke="#eee" stroke-width="1.3"/><rect x="1349" y="166.5" width="14" height="1.3" fill="#e0e0e0"/><rect x="1349" y="169.8" width="14" height="1.3" fill="#e0e0e0"/><rect x="1349" y="173.1" width="14" height="1.3" fill="#e0e0e0"/><rect x="1349" y="176.4" width="14" height="1.3" fill="#e0e0e0"/><rect x="1349" y="179.7" width="14" height="1.3" fill="#e0e0e0"/><rect x="1373" y="161" width="25.5" height="26" rx="4" fill="#4a7fae"/><rect x="1379.5" y="167.5" width="3.6" height="3.6" fill="#fff"/><rect x="1379.5" y="172.5" width="3.6" height="3.6" fill="#fff"/><rect x="1379.5" y="177.5" width="3.6" height="3.6" fill="#fff"/><rect x="1384.5" y="167.5" width="3.6" height="3.6" fill="#fff"/><rect x="1384.5" y="172.5" width="3.6" height="3.6" fill="#fff"/><rect x="1384.5" y="177.5" width="3.6" height="3.6" fill="#fff"/><rect x="1389.5" y="167.5" width="3.6" height="3.6" fill="#fff"/><rect x="1389.5" y="172.5" width="3.6" height="3.6" fill="#fff"/><rect x="1389.5" y="177.5" width="3.6" height="3.6" fill="#fff"/><rect x="1145.5" y="206.0" width="16.330000000000002" height="17.01" fill="#fff"/><path d="M1145.5 221.71 L1160.53 206.0" stroke="#f00" stroke-width="1.3"/><rect x="1161.53" y="206.0" width="16.330000000000002" height="17.01" fill="#fff"/><circle cx="1169.73" cy="214.4" r="5.2" fill="none" stroke="#111" stroke-width="1"/><circle cx="1169.73" cy="214.4" r="2.6" fill="none" stroke="#111" stroke-width="1"/><path d="M1162.73 214.4 H1167.13 M1172.33 214.4 H1176.73 M1169.73 207.4 V211.8 M1169.73 217.0 V221.4" stroke="#111" stroke-width="1"/><rect x="1177.56" y="206.0" width="16.330000000000002" height="17.01" fill="#000000"/><rect x="1193.59" y="206.0" width="16.330000000000002" height="17.01" fill="#ffffff"/><rect x="1209.62" y="206.0" width="16.330000000000002" height="17.01" fill="#00ffff"/><rect x="1225.65" y="206.0" width="16.330000000000002" height="17.01" fill="#ff00ff"/><rect x="1241.68" y="206.0" width="16.330000000000002" height="17.01" fill="#ffff00"/><rect x="1257.71" y="206.0" width="16.330000000000002" height="17.01" fill="#ff0000"/><rect x="1273.74" y="206.0" width="16.330000000000002" height="17.01" fill="#00ff00"/><rect x="1289.77" y="206.0" width="16.330000000000002" height="17.01" fill="#0000ff"/><rect x="1305.8" y="206.0" width="16.330000000000002" height="17.01" fill="#ffffff"/><rect x="1321.83" y="206.0" width="16.330000000000002" height="17.01" fill="#e6e6e6"/><rect x="1337.8600000000001" y="206.0" width="16.330000000000002" height="17.01" fill="#cccccc"/><rect x="1353.89" y="206.0" width="16.330000000000002" height="17.01" fill="#b3b3b3"/><rect x="1369.92" y="206.0" width="16.330000000000002" height="17.01" fill="#999999"/><rect x="1145.5" y="222.71" width="16.330000000000002" height="17.01" fill="#808080"/><rect x="1161.53" y="222.71" width="16.330000000000002" height="17.01" fill="#666666"/><rect x="1177.56" y="222.71" width="16.330000000000002" height="17.01" fill="#454c56"/><rect x="1193.59" y="222.71" width="16.330000000000002" height="17.01" fill="#333333"/><rect x="1209.62" y="222.71" width="16.330000000000002" height="17.01" fill="#1a1a1a"/><rect x="1225.65" y="222.71" width="16.330000000000002" height="17.01" fill="#000000"/><rect x="1241.68" y="222.71" width="16.330000000000002" height="17.01" fill="#000080"/><rect x="1257.71" y="222.71" width="16.330000000000002" height="17.01" fill="#008000"/><rect x="1273.74" y="222.71" width="16.330000000000002" height="17.01" fill="#008080"/><rect x="1289.77" y="222.71" width="16.330000000000002" height="17.01" fill="#0080ff"/><rect x="1305.8" y="222.71" width="16.330000000000002" height="17.01" fill="#00ff80"/><rect x="1321.83" y="222.71" width="16.330000000000002" height="17.01" fill="#800000"/><rect x="1337.8600000000001" y="222.71" width="16.330000000000002" height="17.01" fill="#800080"/><rect x="1353.89" y="222.71" width="16.330000000000002" height="17.01" fill="#8000ff"/><rect x="1369.92" y="222.71" width="16.330000000000002" height="17.01" fill="#808000"/><rect x="1145.5" y="239.42000000000002" width="16.330000000000002" height="17.01" fill="#8080ff"/><rect x="1161.53" y="239.42000000000002" width="16.330000000000002" height="17.01" fill="#80ff00"/><rect x="1177.56" y="239.42000000000002" width="16.330000000000002" height="17.01" fill="#80ff80"/><rect x="1193.59" y="239.42000000000002" width="16.330000000000002" height="17.01" fill="#80ffff"/><rect x="1209.62" y="239.42000000000002" width="16.330000000000002" height="17.01" fill="#ff0080"/><rect x="1225.65" y="239.42000000000002" width="16.330000000000002" height="17.01" fill="#ff8000"/><rect x="1241.68" y="239.42000000000002" width="16.330000000000002" height="17.01" fill="#ff8080"/><rect x="1257.71" y="239.42000000000002" width="16.330000000000002" height="17.01" fill="#ff80ff"/><rect x="1273.74" y="239.42000000000002" width="16.330000000000002" height="17.01" fill="#ffff80"/><rect x="1289.77" y="239.42000000000002" width="16.330000000000002" height="17.01" fill="#663333"/><rect x="1305.8" y="239.42000000000002" width="16.330000000000002" height="17.01" fill="#993333"/><rect x="1321.83" y="239.42000000000002" width="16.330000000000002" height="17.01" fill="#996666"/><rect x="1337.8600000000001" y="239.42000000000002" width="16.330000000000002" height="17.01" fill="#cc3333"/><rect x="1353.89" y="239.42000000000002" width="16.330000000000002" height="17.01" fill="#cc6666"/><rect x="1369.92" y="239.42000000000002" width="16.330000000000002" height="17.01" fill="#cc9999"/><rect x="1145.5" y="256.13" width="16.330000000000002" height="17.01" fill="#996633"/><rect x="1161.53" y="256.13" width="16.330000000000002" height="17.01" fill="#cc6633"/><rect x="1177.56" y="256.13" width="16.330000000000002" height="17.01" fill="#cc9933"/><rect x="1193.59" y="256.13" width="16.330000000000002" height="17.01" fill="#cc9966"/><rect x="1209.62" y="256.13" width="16.330000000000002" height="17.01" fill="#666633"/><rect x="1225.65" y="256.13" width="16.330000000000002" height="17.01" fill="#999933"/><rect x="1241.68" y="256.13" width="16.330000000000002" height="17.01" fill="#999966"/><rect x="1257.71" y="256.13" width="16.330000000000002" height="17.01" fill="#cccc33"/><rect x="1273.74" y="256.13" width="16.330000000000002" height="17.01" fill="#cccc66"/><rect x="1289.77" y="256.13" width="16.330000000000002" height="17.01" fill="#cccc99"/><rect x="1305.8" y="256.13" width="16.330000000000002" height="17.01" fill="#669933"/><rect x="1321.83" y="256.13" width="16.330000000000002" height="17.01" fill="#66cc33"/><rect x="1337.8600000000001" y="256.13" width="16.330000000000002" height="17.01" fill="#99cc33"/><rect x="1353.89" y="256.13" width="16.330000000000002" height="17.01" fill="#99cc66"/><rect x="1369.92" y="256.13" width="16.330000000000002" height="17.01" fill="#336633"/><rect x="1145.5" y="272.84000000000003" width="16.330000000000002" height="17.01" fill="#339933"/><rect x="1161.53" y="272.84000000000003" width="16.330000000000002" height="17.01" fill="#33cc33"/><rect x="1177.56" y="272.84000000000003" width="16.330000000000002" height="17.01" fill="#669966"/><rect x="1193.59" y="272.84000000000003" width="16.330000000000002" height="17.01" fill="#66cc66"/><rect x="1209.62" y="272.84000000000003" width="16.330000000000002" height="17.01" fill="#99cc99"/><rect x="1225.65" y="272.84000000000003" width="16.330000000000002" height="17.01" fill="#339966"/><rect x="1241.68" y="272.84000000000003" width="16.330000000000002" height="17.01" fill="#33cc66"/><rect x="1257.71" y="272.84000000000003" width="16.330000000000002" height="17.01" fill="#33cc99"/><rect x="1273.74" y="272.84000000000003" width="16.330000000000002" height="17.01" fill="#66cc99"/><rect x="1289.77" y="272.84000000000003" width="16.330000000000002" height="17.01" fill="#336666"/><rect x="1305.8" y="272.84000000000003" width="16.330000000000002" height="17.01" fill="#339999"/><rect x="1321.83" y="272.84000000000003" width="16.330000000000002" height="17.01" fill="#33cccc"/><rect x="1337.8600000000001" y="272.84000000000003" width="16.330000000000002" height="17.01" fill="#669999"/><rect x="1353.89" y="272.84000000000003" width="16.330000000000002" height="17.01" fill="#66cccc"/><rect x="1369.92" y="272.84000000000003" width="16.330000000000002" height="17.01" fill="#99cccc"/><rect x="1145.5" y="289.55" width="16.330000000000002" height="17.01" fill="#336699"/><rect x="1161.53" y="289.55" width="16.330000000000002" height="17.01" fill="#3366cc"/><rect x="1177.56" y="289.55" width="16.330000000000002" height="17.01" fill="#3399cc"/><rect x="1193.59" y="289.55" width="16.330000000000002" height="17.01" fill="#6699cc"/><rect x="1209.62" y="289.55" width="16.330000000000002" height="17.01" fill="#333366"/><rect x="1225.65" y="289.55" width="16.330000000000002" height="17.01" fill="#333399"/><rect x="1241.68" y="289.55" width="16.330000000000002" height="17.01" fill="#3333cc"/><rect x="1257.71" y="289.55" width="16.330000000000002" height="17.01" fill="#666699"/><rect x="1273.74" y="289.55" width="16.330000000000002" height="17.01" fill="#6666cc"/><rect x="1289.77" y="289.55" width="16.330000000000002" height="17.01" fill="#9999cc"/><rect x="1305.8" y="289.55" width="16.330000000000002" height="17.01" fill="#663399"/><rect x="1321.83" y="289.55" width="16.330000000000002" height="17.01" fill="#6633cc"/><rect x="1337.8600000000001" y="289.55" width="16.330000000000002" height="17.01" fill="#9933cc"/><rect x="1353.89" y="289.55" width="16.330000000000002" height="17.01" fill="#9966cc"/><rect x="1369.92" y="289.55" width="16.330000000000002" height="17.01" fill="#663366"/><rect x="1145.5" y="306.26" width="16.330000000000002" height="17.01" fill="#993399"/><rect x="1161.53" y="306.26" width="16.330000000000002" height="17.01" fill="#996699"/><rect x="1177.56" y="306.26" width="16.330000000000002" height="17.01" fill="#cc33cc"/><rect x="1193.59" y="306.26" width="16.330000000000002" height="17.01" fill="#cc66cc"/><rect x="1209.62" y="306.26" width="16.330000000000002" height="17.01" fill="#cc99cc"/><rect x="1225.65" y="306.26" width="16.330000000000002" height="17.01" fill="#993366"/><rect x="1241.68" y="306.26" width="16.330000000000002" height="17.01" fill="#cc3366"/><rect x="1257.71" y="306.26" width="16.330000000000002" height="17.01" fill="#cc3399"/><rect x="1273.74" y="306.26" width="16.330000000000002" height="17.01" fill="#cc6699"/><rect x="1176" y="204.6" width="19.6" height="20.2" fill="#000" stroke="#222" stroke-width="1"/><rect x="1177.3" y="205.9" width="17" height="17.6" fill="#000" stroke="#fff" stroke-width="1.8"/><rect x="1144" y="552" width="254" height="1" fill="#2e2e2e"/><g transform="translate(1248,574)"><path d="M-1 -7 H-6.5 A1.5 1.5 0 0 0 -8 -5.5 V7.5 A1.5 1.5 0 0 0 -6.5 9 H6.5 A1.5 1.5 0 0 0 8 7.5 V1" fill="none" stroke="#eee" stroke-width="1.5"/><path d="M8 -9 L10 -7 L1 2 L-2 3 L-1 0 Z" fill="#eee"/></g><g transform="translate(1276.5,574)"><rect x="-8.5" y="-8.5" width="17" height="17" rx="1.5" fill="none" stroke="#eee" stroke-width="1.5"/><path d="M0 -5 V5 M-5 0 H5" stroke="#eee" stroke-width="1.8"/></g><g transform="translate(1304.6,574)"><path d="M-9 -4 H5 V4 H-3 L-6 7 V4 H-9 Z" fill="#eee"/><path d="M-6 -7 H8 V2" fill="none" stroke="#eee" stroke-width="1.4"/><path d="M5 6 H11 M8 3 V9" stroke="#eee" stroke-width="1.4"/></g><g transform="translate(1332.5,574)"><rect x="-8.5" y="-8.5" width="7" height="7" fill="none" stroke="#eee" stroke-width="1.3"/><rect x="-8.5" y="1.5" width="7" height="7" fill="none" stroke="#eee" stroke-width="1.3"/><rect x="1.5" y="1.5" width="7" height="7" fill="none" stroke="#eee" stroke-width="1.3"/><path d="M7 -9.5 L9 -7.5 L3.5 -2 L1 -1 L2 -3.5 Z" fill="none" stroke="#eee" stroke-width="1.2"/></g><g transform="translate(1361,574)"><path d="M-7.5 -6 H7.5 M-3 -6 V-8.5 H3 V-6" fill="none" stroke="#eee" stroke-width="1.5"/><path d="M-6 -4 L-5 9 H5 L6 -4" fill="none" stroke="#eee" stroke-width="1.5"/><path d="M-2 -2 V7 M2 -2 V7" stroke="#eee" stroke-width="1.2"/></g><g transform="translate(1388,574)"><rect x="-9" y="-9" width="6" height="18" rx="1" fill="none" stroke="#eee" stroke-width="1.2"/><path d="M-3 -7 L3 -6 M-3 -3 A12 12 0 0 1 6 -3 M-3 2 A12 12 0 0 1 9 3 L9 9 H-3 M1 -6.5 L0 9 M3 -5 L4 9 M5.5 -3 L7.5 9" fill="none" stroke="#eee" stroke-width="1.1"/><circle cx="-6" cy="6" r="1" fill="#eee"/></g></svg>
<svg style="position:absolute;left:41px;top:881px;overflow:visible;" width="1092" height="19" viewBox="41 881 1092 19"><rect x="41" y="881" width="1075" height="19" fill="#3e3e3e"/><rect x="500" y="881" width="616" height="19" fill="#3a3a3a"/><rect x="41" y="882" width="70" height="15.5" rx="4" fill="#5e5e5e"/><text x="49" y="894.5" font-size="11.5" fill="#f0f0f0" font-family="Liberation Sans" stroke="#f0f0f0" stroke-width="0.35">100.0%</text><path d="M95 887 L100 892 L105 887" fill="none" stroke="#eee" stroke-width="1.3"/><rect x="113" y="882" width="59.5" height="15.5" rx="4" fill="#5e5e5e"/><text x="121" y="894.5" font-size="12" fill="#f0f0f0" font-family="Liberation Sans" stroke="#f0f0f0" stroke-width="0.35">0.0°</text><path d="M156 887 L161 892 L166 887" fill="none" stroke="#eee" stroke-width="1.3"/><path d="M178 884.5 V895 M186.5 884.5 L180 889.75 L186.5 895 Z" fill="#f0f0f0" stroke="#f0f0f0" stroke-width="1.6"/><path d="M202 884.5 L195.5 889.75 L202 895 Z" fill="#f0f0f0"/><rect x="207" y="882" width="53" height="15.5" rx="3" fill="#5e5e5e"/><text x="214" y="894.5" font-size="12" fill="#f0f0f0" font-family="Liberation Sans" stroke="#f0f0f0" stroke-width="0.35">1</text><path d="M246 887 L251 892 L256 887" fill="none" stroke="#eee" stroke-width="1.3"/><path d="M267 884.5 L273.5 889.75 L267 895 Z" fill="#f0f0f0"/><path d="M291 884.5 V895 M282.5 884.5 L289 889.75 L282.5 895 Z" fill="#f0f0f0" stroke="#f0f0f0" stroke-width="1.6"/><rect x="297" y="882" width="179" height="15.5" rx="4" fill="#5e5e5e"/><text x="303" y="894.5" font-size="12" fill="#f0f0f0" font-family="Liberation Sans" stroke="#f0f0f0" stroke-width="0.35">2 objects</text><path d="M460 887 L465 892 L470 887" fill="none" stroke="#eee" stroke-width="1.3"/><rect x="480" y="882" width="14" height="15.5" rx="1.5" fill="#f04848"/><path d="M483 885.5 H491 M487 887 V894 M484.5 891 L487 894 L489.5 891" fill="none" stroke="#3a1010" stroke-width="1.2"/><path d="M509 884.5 L504.5 889.75 L509 895" fill="none" stroke="#eee" stroke-width="1.5"/><rect x="538" y="883" width="58" height="13" rx="6.5" fill="#6a6a6a"/><path d="M1102 884.5 L1106.5 889.75 L1102 895" fill="none" stroke="#eee" stroke-width="1.5"/></svg>
<svg style="position:absolute;left:1134px;top:597px;overflow:visible;" width="279" height="303" viewBox="1134 597 279 303"><path d="M1134 619.6 V605 A8 8 0 0 1 1142 597 H1405 A8 8 0 0 1 1413 605 V619.6 Z" fill="#353535"/><rect x="1134" y="619" width="279" height="1.2" fill="#5a5a5a"/><path d="M1177 620.2 V603.7 A6 6 0 0 1 1183 597.7 H1248 A6 6 0 0 1 1254 603.7 V620.2 Z" fill="#424242" stroke="#4e5560" stroke-width="0.8"/><rect x="1177.5" y="619" width="76" height="2" fill="#424242"/><circle cx="1150" cy="608" r="7" fill="#8c8c8c"/><path d="M1147 605 l6 6 M1153 605 l-6 6" stroke="#262626" stroke-width="1.3"/><rect x="1165.5" y="601" width="1" height="15" fill="#8a8a8a"/><rect x="1169.5" y="601" width="1" height="15" fill="#8a8a8a"/><text x="1193" y="613.5" font-size="13" fill="#f0f0f0" font-family="Liberation Sans" stroke="#f0f0f0" stroke-width="0.35">Layers</text><circle cx="1242.8" cy="608" r="6.5" fill="#8c8c8c"/><path d="M1239.8 605 l6 6 M1245.8 605 l-6 6" stroke="#262626" stroke-width="1.3"/><defs><clipPath id="clipA"><rect x="1260" y="598" width="47.5" height="20"/></clipPath><clipPath id="clipC"><rect x="1315" y="598" width="47.5" height="20"/></clipPath></defs><text x="1269" y="613.5" font-size="13" fill="#c4c4c4" font-family="Liberation Sans" clip-path="url(#clipA)" stroke="#c4c4c4" stroke-width="0.35">Actions</text><text x="1321.8" y="613.5" font-size="13" fill="#c4c4c4" font-family="Liberation Sans" clip-path="url(#clipC)" stroke="#c4c4c4" stroke-width="0.35">Canvas</text><rect x="1365" y="598" width="18" height="20" rx="3" fill="#5c5c58"/><path d="M1372 604.5 L1377 608 L1372 611.5 Z" fill="#eee"/><rect x="1386.4" y="598" width="22.4" height="20" rx="3" fill="#3c3c3c"/><rect x="1391" y="602" width="13" height="1.2" fill="#cfcfcf"/><rect x="1391" y="605.8" width="13" height="1.2" fill="#cfcfcf"/><rect x="1391" y="609.6" width="13" height="1.2" fill="#cfcfcf"/><rect x="1391" y="613.4" width="13" height="1.2" fill="#cfcfcf"/><rect x="1138" y="657.5" width="258" height="0.9" fill="#2f2f2f"/><rect x="1138" y="685.3" width="258" height="0.9" fill="#2f2f2f"/><rect x="1138" y="713.3" width="258" height="0.9" fill="#2f2f2f"/><rect x="1138" y="741.5" width="258" height="0.9" fill="#2f2f2f"/><rect x="1138" y="769.5" width="258" height="0.9" fill="#2f2f2f"/><rect x="1138" y="797.3" width="258" height="0.9" fill="#2f2f2f"/><rect x="1138" y="825.5" width="271" height="0.9" fill="#2f2f2f"/><rect x="1139" y="630" width="255.6" height="27" rx="6" fill="#3e4b5b"/><rect x="1144.5" y="634.5" width="16.5" height="18.5" rx="2" fill="#000" stroke="#777" stroke-width="0.8"/><path d="M1167.5 640.0 H1178.5 L1173 647.5 Z" fill="#d8d8d8"/><rect x="1185.6" y="633.2" width="20.2" height="20" fill="#e8e8e8"/><rect x="1187.6" y="636.2" width="5" height="5" fill="#c8c8c8"/><rect x="1187.6" y="646.2" width="6" height="6" fill="#d0d0d0"/><circle cx="1196.6" cy="644.2" r="6" fill="none" stroke="#fafafa" stroke-width="2.2"/><path d="M1192.6 648.2 L1196.6 641.2 L1199.6 648.2 Z" fill="#cfcfcf"/><text x="1210" y="646.9" font-size="12.5" fill="#f4f4f4" font-family="Liberation Sans" stroke="#f4f4f4" stroke-width="0.35">Layer 1</text><path d="M1338.5 642.5 V639.5 A3.2 3.2 0 0 1 1345 639.0" fill="none" stroke="#eee" stroke-width="1.2"/><rect x="1342" y="642.5" width="9.5" height="7.5" fill="none" stroke="#eee" stroke-width="1.2"/><path d="M1356.5 643.5 Q1362.7 636.5 1369 643.5 Q1362.7 650.5 1356.5 643.5 Z" fill="none" stroke="#eee" stroke-width="1.2"/><circle cx="1362.7" cy="643.5" r="1.8" fill="none" stroke="#eee" stroke-width="1.1"/><circle cx="1380.8" cy="643.5" r="6.3" fill="none" stroke="#eee" stroke-width="1.3"/><rect x="1197.7" y="661.2" width="20.2" height="20" fill="#e8e8e8"/><rect x="1199.7" y="664.2" width="5" height="5" fill="#c8c8c8"/><rect x="1199.7" y="674.2" width="6" height="6" fill="#d0d0d0"/><circle cx="1208.7" cy="672.2" r="6" fill="none" stroke="#fafafa" stroke-width="2.2"/><path d="M1204.7 676.2 L1208.7 669.2 L1211.7 676.2 Z" fill="#cfcfcf"/><text x="1221.7" y="674.9" font-size="12.5" fill="#f4f4f4" font-family="Liberation Sans" stroke="#f4f4f4" stroke-width="0.35">{Rectangle}</text><path d="M1338.5 670.5 V667.5 A3.2 3.2 0 0 1 1345 667.0" fill="none" stroke="#eee" stroke-width="1.2"/><rect x="1342" y="670.5" width="9.5" height="7.5" fill="none" stroke="#eee" stroke-width="1.2"/><path d="M1356.5 671.5 Q1362.7 664.5 1369 671.5 Q1362.7 678.5 1356.5 671.5 Z" fill="none" stroke="#eee" stroke-width="1.2"/><circle cx="1362.7" cy="671.5" r="1.8" fill="none" stroke="#eee" stroke-width="1.1"/><circle cx="1380.8" cy="671.5" r="6.3" fill="none" stroke="#eee" stroke-width="1.3"/><rect x="1197.7" y="689.2" width="20.2" height="20" fill="#e8e8e8"/><rect x="1199.7" y="692.2" width="5" height="5" fill="#c8c8c8"/><rect x="1199.7" y="702.2" width="6" height="6" fill="#d0d0d0"/><circle cx="1208.7" cy="700.2" r="6" fill="none" stroke="#fafafa" stroke-width="2.2"/><path d="M1204.7 704.2 L1208.7 697.2 L1211.7 704.2 Z" fill="#cfcfcf"/><text x="1221.7" y="702.9" font-size="12.5" fill="#f4f4f4" font-family="Liberation Sans" stroke="#f4f4f4" stroke-width="0.35">{Rectangle}</text><path d="M1338.5 698.5 V695.5 A3.2 3.2 0 0 1 1345 695.0" fill="none" stroke="#eee" stroke-width="1.2"/><rect x="1342" y="698.5" width="9.5" height="7.5" fill="none" stroke="#eee" stroke-width="1.2"/><path d="M1356.5 699.5 Q1362.7 692.5 1369 699.5 Q1362.7 706.5 1356.5 699.5 Z" fill="none" stroke="#eee" stroke-width="1.2"/><circle cx="1362.7" cy="699.5" r="1.8" fill="none" stroke="#eee" stroke-width="1.1"/><circle cx="1380.8" cy="699.5" r="6.3" fill="none" stroke="#eee" stroke-width="1.3"/><rect x="1138.8" y="713.8" width="256.2" height="26.8" rx="6" fill="#4372c4"/><rect x="1197.7" y="717.2" width="20.2" height="20" fill="#e8e8e8"/><rect x="1199.7" y="720.2" width="5" height="5" fill="#c8c8c8"/><rect x="1199.7" y="730.2" width="6" height="6" fill="#d0d0d0"/><circle cx="1208.7" cy="728.2" r="6" fill="none" stroke="#fafafa" stroke-width="2.2"/><path d="M1204.7 732.2 L1208.7 725.2 L1211.7 732.2 Z" fill="#cfcfcf"/><text x="1221.7" y="730.9" font-size="12.5" fill="#f4f4f4" font-family="Liberation Sans" stroke="#f4f4f4" stroke-width="0.35">{Rectangle}</text><path d="M1338.5 726.5 V723.5 A3.2 3.2 0 0 1 1345 723.0" fill="none" stroke="#eee" stroke-width="1.2"/><rect x="1342" y="726.5" width="9.5" height="7.5" fill="none" stroke="#eee" stroke-width="1.2"/><path d="M1356.5 727.5 Q1362.7 720.5 1369 727.5 Q1362.7 734.5 1356.5 727.5 Z" fill="none" stroke="#eee" stroke-width="1.2"/><circle cx="1362.7" cy="727.5" r="1.8" fill="none" stroke="#eee" stroke-width="1.1"/><circle cx="1380.8" cy="727.5" r="6.3" fill="none" stroke="#eee" stroke-width="1.3"/><circle cx="1380.8" cy="727.5" r="3.5" fill="#eee"/><rect x="1138.8" y="742" width="256.2" height="26.8" rx="6" fill="#4372c4"/><path d="M1181 750.5 V760.5 L1189 755.5 Z" fill="#c8d0e0"/><rect x="1197.7" y="745.2" width="20.2" height="20" fill="#e8e8e8"/><rect x="1199.7" y="748.2" width="5" height="5" fill="#c8c8c8"/><rect x="1199.7" y="758.2" width="6" height="6" fill="#d0d0d0"/><circle cx="1208.7" cy="756.2" r="6" fill="none" stroke="#fafafa" stroke-width="2.2"/><path d="M1204.7 760.2 L1208.7 753.2 L1211.7 760.2 Z" fill="#cfcfcf"/><text x="1221.7" y="758.9" font-size="12.5" fill="#f4f4f4" font-family="Liberation Sans" stroke="#f4f4f4" stroke-width="0.35">{Group}</text><path d="M1338.5 754.5 V751.5 A3.2 3.2 0 0 1 1345 751.0" fill="none" stroke="#eee" stroke-width="1.2"/><rect x="1342" y="754.5" width="9.5" height="7.5" fill="none" stroke="#eee" stroke-width="1.2"/><path d="M1356.5 755.5 Q1362.7 748.5 1369 755.5 Q1362.7 762.5 1356.5 755.5 Z" fill="none" stroke="#eee" stroke-width="1.2"/><circle cx="1362.7" cy="755.5" r="1.8" fill="none" stroke="#eee" stroke-width="1.1"/><circle cx="1380.8" cy="755.5" r="6.3" fill="none" stroke="#eee" stroke-width="1.3"/><circle cx="1380.8" cy="755.5" r="3.5" fill="#eee"/><rect x="1197.7" y="773.2" width="20.2" height="20" fill="#e8e8e8"/><rect x="1199.7" y="776.2" width="5" height="5" fill="#c8c8c8"/><rect x="1199.7" y="786.2" width="6" height="6" fill="#d0d0d0"/><circle cx="1208.7" cy="784.2" r="6" fill="none" stroke="#fafafa" stroke-width="2.2"/><path d="M1204.7 788.2 L1208.7 781.2 L1211.7 788.2 Z" fill="#cfcfcf"/><text x="1221.7" y="786.9" font-size="12.5" fill="#f4f4f4" font-family="Liberation Sans" stroke="#f4f4f4" stroke-width="0.35">{Rectangle}</text><path d="M1338.5 782.5 V779.5 A3.2 3.2 0 0 1 1345 779.0" fill="none" stroke="#eee" stroke-width="1.2"/><rect x="1342" y="782.5" width="9.5" height="7.5" fill="none" stroke="#eee" stroke-width="1.2"/><path d="M1356.5 783.5 Q1362.7 776.5 1369 783.5 Q1362.7 790.5 1356.5 783.5 Z" fill="none" stroke="#eee" stroke-width="1.2"/><circle cx="1362.7" cy="783.5" r="1.8" fill="none" stroke="#eee" stroke-width="1.1"/><circle cx="1380.8" cy="783.5" r="6.3" fill="none" stroke="#eee" stroke-width="1.3"/><rect x="1398" y="630" width="9.8" height="190" rx="4.9" fill="#9a9a9a"/><rect x="1138" y="832" width="271" height="19.5" rx="8" fill="#333"/><circle cx="1153" cy="840" r="4.2" fill="none" stroke="#eee" stroke-width="1.4"/><path d="M1150 843.5 L1146 847.5" stroke="#eee" stroke-width="1.8"/><text x="1162" y="846.5" font-size="13" fill="#9a9a9a" font-family="Liberation Sans" stroke="#9a9a9a" stroke-width="0.35">Search</text><circle cx="1394" cy="841" r="5.2" fill="none" stroke="#eee" stroke-width="1.4"/><path d="M1392 839 l4 4 M1396 839 l-4 4" stroke="#eee" stroke-width="1.2"/><path d="M1398 845 L1401 848" stroke="#eee" stroke-width="1.6"/><g transform="translate(1147,878)"><path d="M-8 -4 H8 M-8 4 H8" stroke="#eee" stroke-width="1.5"/><circle cx="-3" cy="-4" r="2.6" fill="#414141" stroke="#eee" stroke-width="1.4"/><circle cx="3" cy="4" r="2.6" fill="#414141" stroke="#eee" stroke-width="1.4"/></g><g transform="translate(1175,878)"><rect x="-8" y="-3" width="10" height="11" fill="none" stroke="#eee" stroke-width="1.5"/><path d="M-4 -3 V-8 H8 V4 H2" fill="none" stroke="#eee" stroke-width="1.5"/></g><g transform="translate(1203,878)"><circle r="8.5" fill="#eee"/><rect x="-5" y="-4" width="6" height="6" fill="none" stroke="#414141" stroke-width="1.3"/><rect x="-1" y="-1" width="6" height="6" fill="none" stroke="#414141" stroke-width="1.3"/></g><g transform="translate(1231,878)"><rect x="-8.5" y="-8.5" width="17" height="17" fill="none" stroke="#eee" stroke-width="1.2"/><rect x="-4.5" y="-2" width="7" height="6" fill="none" stroke="#eee" stroke-width="1.2"/><rect x="-2" y="-4.5" width="7" height="6" fill="none" stroke="#eee" stroke-width="1.2"/></g><g transform="translate(1259,878)"><rect x="-6" y="-3" width="10" height="10" fill="none" stroke="#eee" stroke-width="1.4"/><rect x="-2" y="-7" width="10" height="10" fill="none" stroke="#eee" stroke-width="1.4"/><path d="M-2 -10 V-7 M4 7 V10" stroke="#eee"/></g><g transform="translate(1287,878)"><rect x="-8.5" y="-8.5" width="17" height="17" fill="none" stroke="#ddd" stroke-width="1.2"/><text x="-5.5" y="4.5" font-size="12" font-style="italic" fill="#eee" font-family="Liberation Serif" stroke="#eee" stroke-width="0.35">fx</text></g><g transform="translate(1315,878)"><path d="M-9 -4 A2 2 0 0 1 -7 -6 H-4 L-2.5 -8 H2.5 L4 -6 H7 A2 2 0 0 1 9 -4 V6 A2 2 0 0 1 7 8 H-7 A2 2 0 0 1 -9 6 Z" fill="#eee"/><circle cx="0" cy="1" r="3.6" fill="#414141"/><circle cx="0" cy="1" r="2.2" fill="#eee"/></g><g transform="translate(1343,878)"><rect x="-9" y="-5" width="13" height="14" rx="1" fill="#eee"/><path d="M-5 -8 H8 V5" fill="none" stroke="#eee" stroke-width="1.5"/><path d="M-2.5 -1 V6 M-6 2.5 H1" stroke="#414141" stroke-width="1.5"/></g><g transform="translate(1371,878)"><rect x="-9" y="-9" width="18" height="18" rx="4" fill="#eee"/><path d="M-5 3 L0 5.5 L5 3 M-5 0 L0 2.5 L5 0 L0 -2.5 Z" fill="none" stroke="#414141" stroke-width="1.2"/><path d="M3 -5 H7 M5 -7 V-3" stroke="#414141" stroke-width="1.2"/></g><g transform="translate(1398.5,878)"><path d="M-7.5 -6 H7.5 M-3 -6 V-8.5 H3 V-6" fill="none" stroke="#eee" stroke-width="1.5"/><path d="M-6 -4 L-5 9 H5 L6 -4" fill="none" stroke="#eee" stroke-width="1.5"/><path d="M-2 -2 V7 M2 -2 V7" stroke="#eee" stroke-width="1.2"/></g></svg>
<svg style="position:absolute;left:1413px;top:117px;overflow:visible;" width="27" height="783" viewBox="1413 117 27 783"><path d="M1416 892 V123 A3.5 3.5 0 0 1 1419.5 119.5 H1434.5 A3.5 3.5 0 0 1 1438 123 V892 A5.5 5.5 0 0 1 1432.5 897.5 H1421.5 A5.5 5.5 0 0 1 1416 892 Z" fill="#414141"/><circle cx="1420.7" cy="130.0" r="1.2" fill="#d0d0d0"/><circle cx="1420.7" cy="134.1" r="1.2" fill="#d0d0d0"/><circle cx="1424.7" cy="130.0" r="1.2" fill="#d0d0d0"/><circle cx="1424.7" cy="134.1" r="1.2" fill="#d0d0d0"/><circle cx="1428.7" cy="130.0" r="1.2" fill="#d0d0d0"/><circle cx="1428.7" cy="134.1" r="1.2" fill="#d0d0d0"/><circle cx="1432.7" cy="130.0" r="1.2" fill="#d0d0d0"/><circle cx="1432.7" cy="134.1" r="1.2" fill="#d0d0d0"/><circle cx="1421.3" cy="147.8" r="2.2" fill="none" stroke="#ddd" stroke-width="1.1"/><rect x="1424.5" y="145.2" width="11" height="1.3" fill="#ddd"/><rect x="1424.5" y="149.5" width="11" height="1.3" fill="#ddd"/><circle cx="1421.3" cy="156.8" r="2.2" fill="none" stroke="#ddd" stroke-width="1.1"/><rect x="1424.5" y="154.2" width="11" height="1.3" fill="#ddd"/><rect x="1424.5" y="158.5" width="11" height="1.3" fill="#ddd"/><rect x="1416.8" y="163.0" width="19.6" height="18.3" fill="#fff"/><path d="M1417 180.0 L1436 164.0" stroke="#f00" stroke-width="1.3"/><rect x="1416.8" y="181.0" width="19.6" height="18.3" fill="#fff"/><circle cx="1426.6" cy="190.0" r="5.5" fill="none" stroke="#111" stroke-width="1"/><circle cx="1426.6" cy="190.0" r="2.75" fill="none" stroke="#111" stroke-width="1"/><path d="M1419.3 190.0 H1423.85 M1429.35 190.0 H1433.8999999999999 M1426.6 182.7 V187.25 M1426.6 192.75 V197.3" stroke="#111" stroke-width="1"/><rect x="1416.8" y="199.0" width="19.6" height="18.3" fill="#000000"/><rect x="1416.8" y="217.0" width="19.6" height="18.3" fill="#ffffff"/><rect x="1416.8" y="235.0" width="19.6" height="18.3" fill="#00ffff"/><rect x="1416.8" y="253.0" width="19.6" height="18.3" fill="#ff00ff"/><rect x="1416.8" y="271.0" width="19.6" height="18.3" fill="#ffff00"/><rect x="1416.8" y="289.0" width="19.6" height="18.3" fill="#ff0000"/><rect x="1416.8" y="307.0" width="19.6" height="18.3" fill="#00ff00"/><rect x="1416.8" y="325.0" width="19.6" height="18.3" fill="#0000ff"/><rect x="1416.8" y="343.0" width="19.6" height="18.3" fill="#ffffff"/><rect x="1416.8" y="361.0" width="19.6" height="18.3" fill="#e6e6e6"/><rect x="1416.8" y="379.0" width="19.6" height="18.3" fill="#cccccc"/><rect x="1416.8" y="397.0" width="19.6" height="18.3" fill="#b3b3b3"/><rect x="1416.8" y="415.0" width="19.6" height="18.3" fill="#999999"/><rect x="1416.8" y="433.0" width="19.6" height="18.3" fill="#808080"/><rect x="1416.8" y="451.0" width="19.6" height="18.3" fill="#666666"/><rect x="1416.8" y="469.0" width="19.6" height="18.3" fill="#454c56"/><rect x="1416.8" y="487.0" width="19.6" height="18.3" fill="#333333"/><rect x="1416.8" y="505.0" width="19.6" height="18.3" fill="#1a1a1a"/><rect x="1416.8" y="523.0" width="19.6" height="18.3" fill="#000000"/><rect x="1416.8" y="541.0" width="19.6" height="18.3" fill="#000080"/><rect x="1416.8" y="559.0" width="19.6" height="18.3" fill="#008000"/><rect x="1416.8" y="577.0" width="19.6" height="18.3" fill="#008080"/><rect x="1416.8" y="595.0" width="19.6" height="18.3" fill="#0080ff"/><rect x="1416.8" y="613.0" width="19.6" height="18.3" fill="#00ff80"/><rect x="1416.8" y="631.0" width="19.6" height="18.3" fill="#800000"/><rect x="1416.8" y="649.0" width="19.6" height="18.3" fill="#800080"/><rect x="1416.8" y="667.0" width="19.6" height="18.3" fill="#8000ff"/><rect x="1416.8" y="685.0" width="19.6" height="18.3" fill="#808000"/><rect x="1416.8" y="703.0" width="19.6" height="18.3" fill="#8080ff"/><rect x="1416.8" y="721.0" width="19.6" height="18.3" fill="#80ff00"/><rect x="1416.8" y="739.0" width="19.6" height="18.3" fill="#80ff80"/><rect x="1416.8" y="757.0" width="19.6" height="18.3" fill="#80ffff"/><rect x="1416.8" y="775.0" width="19.6" height="18.3" fill="#ff0080"/><rect x="1416.8" y="793.0" width="19.6" height="18.3" fill="#ff8000"/><rect x="1416.8" y="811.0" width="19.6" height="18.3" fill="#ff8080"/><rect x="1416.8" y="829.0" width="19.6" height="18.3" fill="#ff80ff"/><rect x="1416.8" y="847.0" width="19.6" height="18.3" fill="#ffff80"/><rect x="1416.8" y="865.0" width="19.6" height="9.0" fill="#663333"/><path d="M1420.5 877 H1433.5 A1.8 1.8 0 0 1 1435.3 878.8 V887.3 A1.8 1.8 0 0 1 1433.5 889.1 H1425 L1421.5 893 V889.1 H1420.5 A1.8 1.8 0 0 1 1418.7 887.3 V878.8 A1.8 1.8 0 0 1 1420.5 877 Z" fill="#d0d0d0"/><path d="M1423 881.5 H1431 M1423 884.5 H1431" stroke="#3a3a3a" stroke-width="1.1"/></svg>
<svg style="position:absolute;left:1116px;top:700px;overflow:visible;" width="324" height="82" viewBox="1116 700 324 82"><rect x="1123.65" y="706.65" width="293.7" height="68.7" fill="none" stroke="#ff2a00" stroke-width="5.3"/></svg>
<svg style="position:absolute;left:0px;top:880px;overflow:visible;" width="1440" height="20" viewBox="0 880 1440 20"><rect x="0" y="897.5" width="1440" height="1" fill="#262626"/><rect x="0" y="898.5" width="1440" height="1.5" fill="#4a4a4a"/><path d="M0 888 V900 H12 A12 12 0 0 1 0 888 Z" fill="#000"/><path d="M0 886 A12 12 0 0 0 12 898" fill="none" stroke="#5a5a5a" stroke-width="1"/><path d="M1440 888 V900 H1428 A12 12 0 0 0 1440 888 Z" fill="#000"/></svg>
</body></html>
